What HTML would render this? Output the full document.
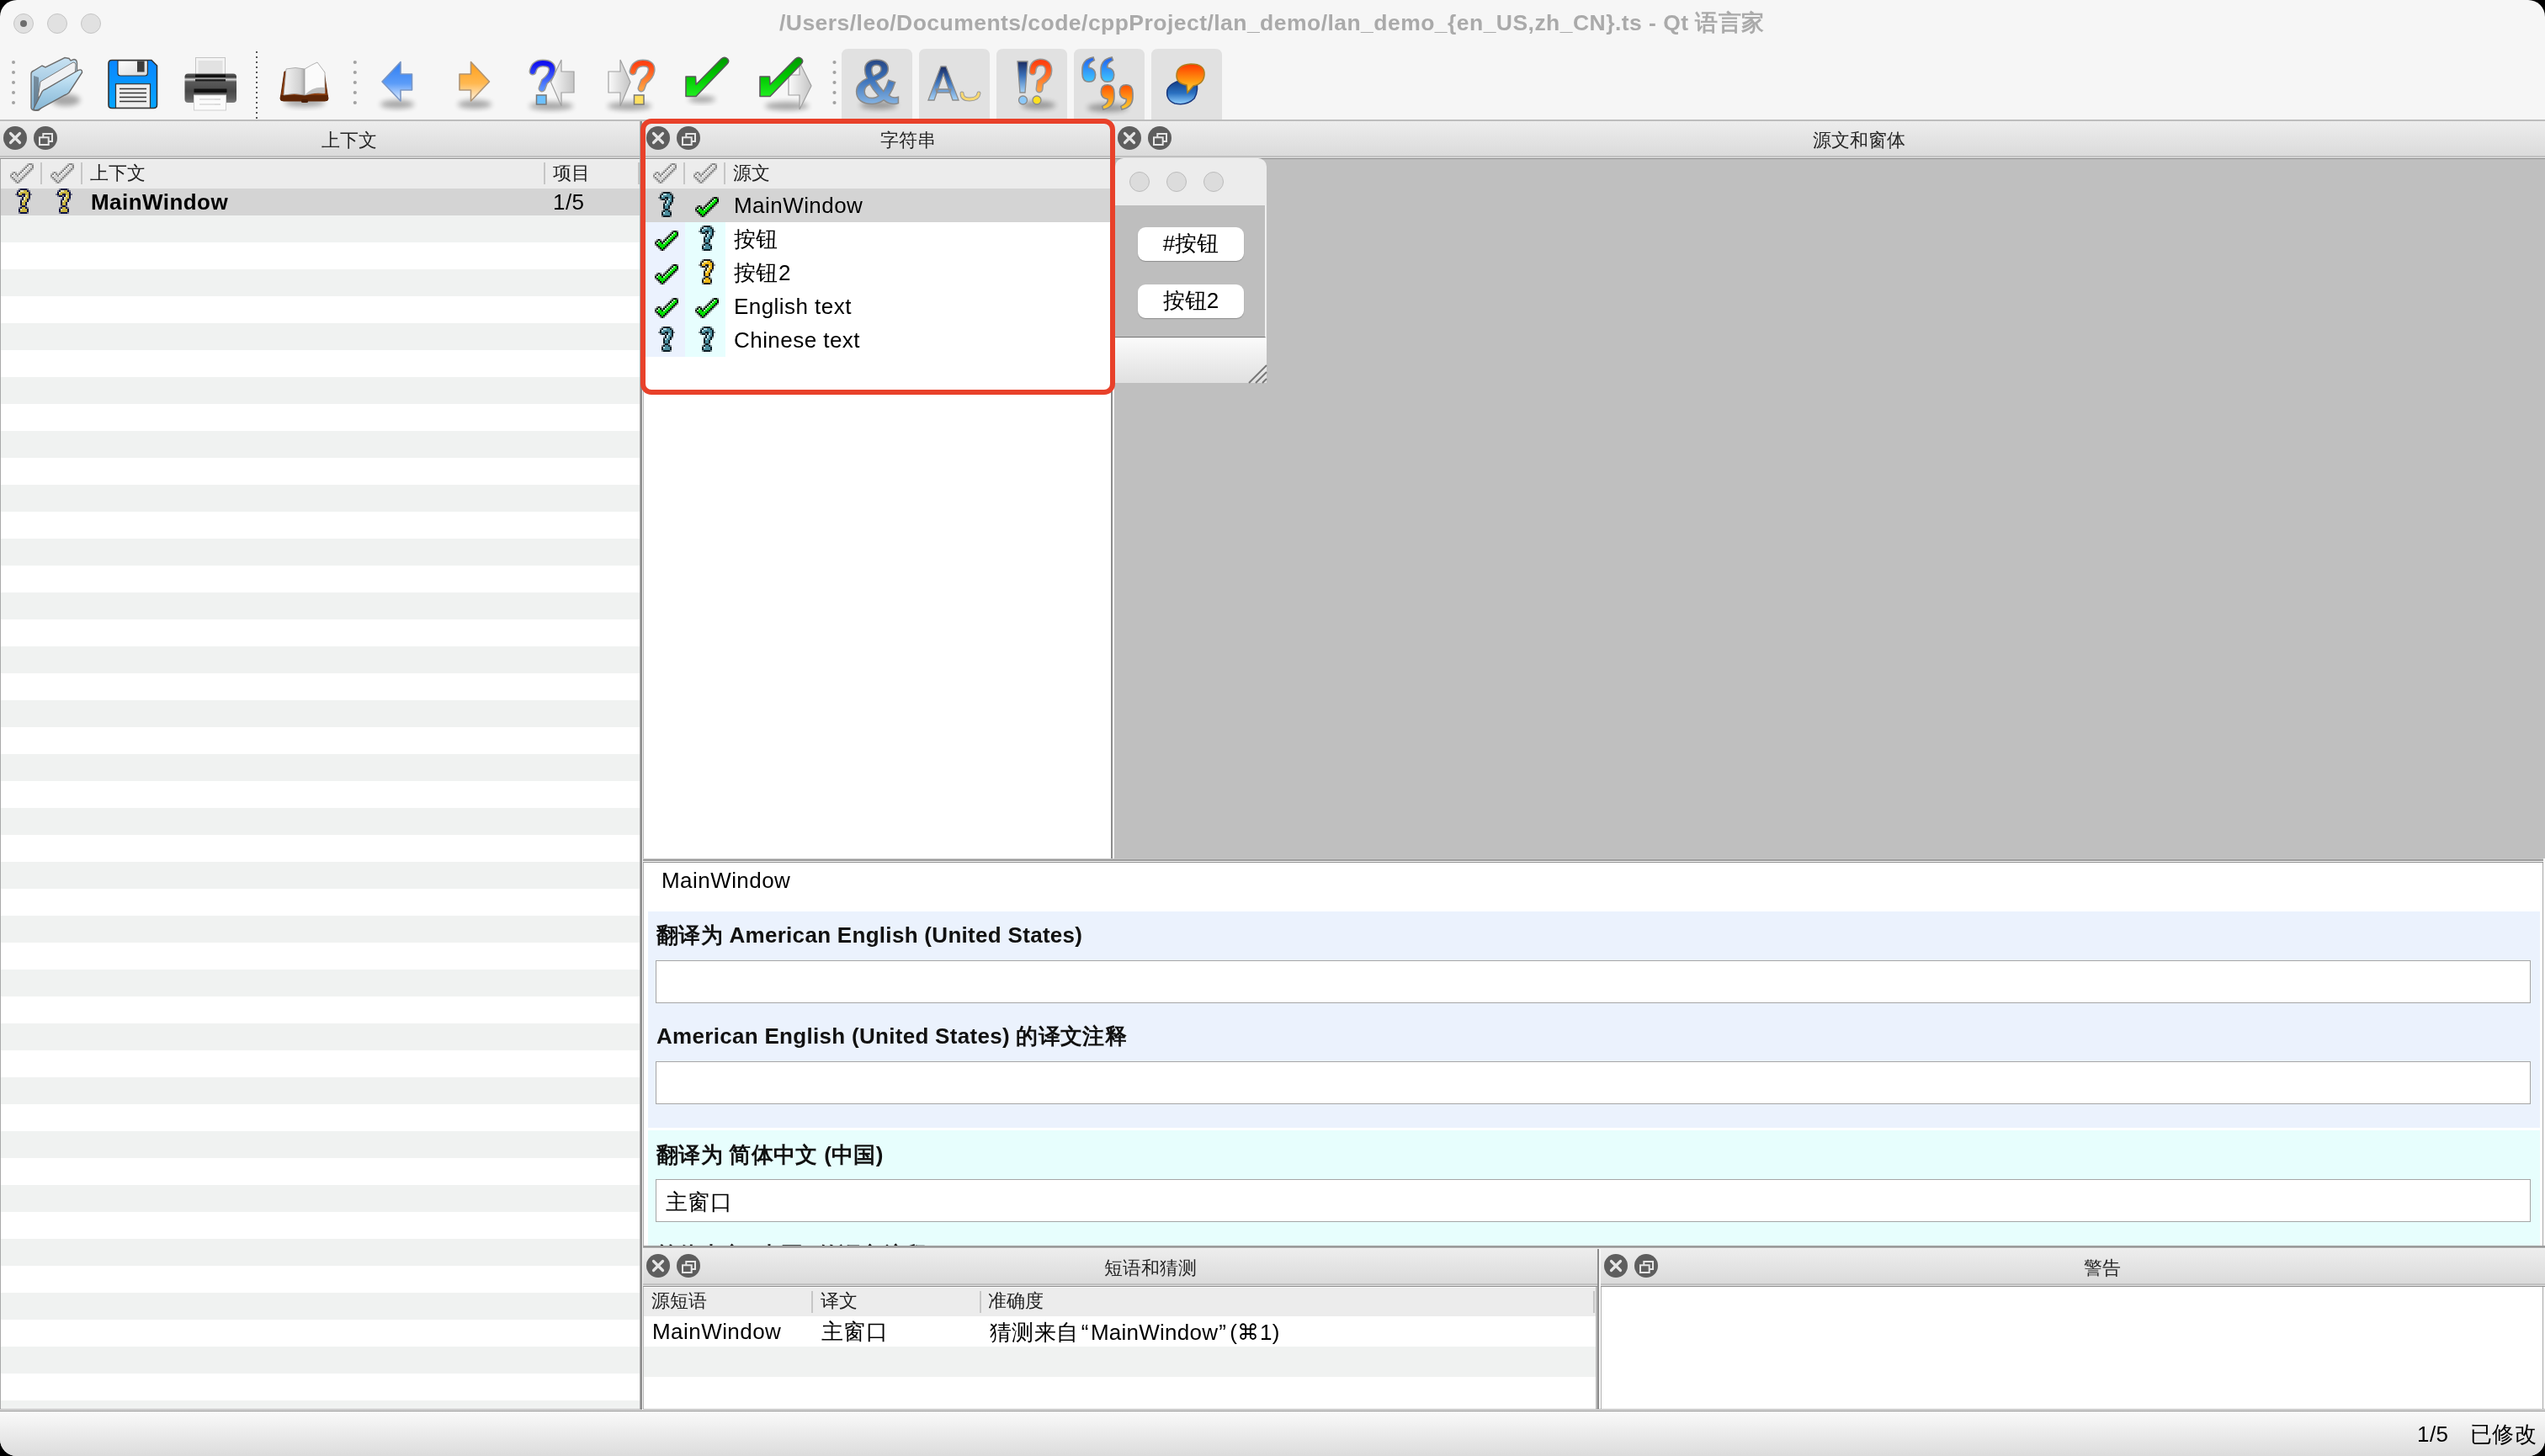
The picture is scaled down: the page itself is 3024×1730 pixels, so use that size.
<!DOCTYPE html><html><head><meta charset="utf-8"><style>
*{box-sizing:border-box;margin:0;padding:0}
html,body{width:3024px;height:1730px;overflow:hidden;background:#000}
body{font-family:"Liberation Sans",sans-serif;color:#000}
#win{will-change:transform;position:absolute;left:0;top:0;width:3024px;height:1730px;border-radius:20px;overflow:hidden;background:#f6f6f6}
.a{position:absolute}
svg{position:absolute;overflow:visible}
.tl{position:absolute;width:24px;height:24px;border-radius:50%;background:#e1e1e1;border:1px solid #c4c4c4;top:16px}
.title{position:absolute;top:9px;font-weight:bold;font-size:26.5px;color:#aaaaaa;white-space:pre;letter-spacing:0.46px}
.dtitle{position:absolute;height:45px;background:linear-gradient(#ededed,#d9d9d9)}
.dtitle .t{position:absolute;top:9px;text-align:center;font-size:22px;color:#262626;white-space:pre}
.hdr{position:absolute;background:#ececec;font-size:22px;color:#222}
.sep{position:absolute;width:2px;background:#c6c6c6}
.txt{position:absolute;white-space:pre;font-size:26px;letter-spacing:0.45px}
.htxt{position:absolute;white-space:pre;font-size:22px;color:#222}
.bh{position:absolute;white-space:pre;font-size:26px;font-weight:bold;color:#111;letter-spacing:0.3px}
.inp{position:absolute;background:#fff;border:1px solid #a6a6a6}
.tb{position:absolute;top:58px;width:84px;height:84px;background:#e1e1e1;border-radius:8px 8px 0 0}
</style></head><body><div id="win">
<div class="tl" style="left:16px"><div class="a" style="left:7px;top:7px;width:8px;height:8px;border-radius:50%;background:#6e6e6e"></div></div>
<div class="tl" style="left:56px"></div><div class="tl" style="left:96px"></div>
<div class="title" style="left:926px">/Users/leo/Documents/code/cppProject/lan_demo/lan_demo_{en_US,zh_CN}.ts - Qt 语言家</div>
<div class="a" style="left:13.6px;top:71.9px;width:4.2px;height:4.2px;border-radius:50%;background:#a2a2a2"></div><div class="a" style="left:13.6px;top:83.9px;width:4.2px;height:4.2px;border-radius:50%;background:#a2a2a2"></div><div class="a" style="left:13.6px;top:95.9px;width:4.2px;height:4.2px;border-radius:50%;background:#a2a2a2"></div><div class="a" style="left:13.6px;top:107.9px;width:4.2px;height:4.2px;border-radius:50%;background:#a2a2a2"></div><div class="a" style="left:13.6px;top:119.9px;width:4.2px;height:4.2px;border-radius:50%;background:#a2a2a2"></div><svg style="left:0;top:0" width="1460" height="142" viewBox="0 0 1460 142"><defs>
<linearGradient id="gfold" x1="0" y1="0" x2="0" y2="1"><stop offset="0" stop-color="#c9e3f3"/><stop offset="1" stop-color="#7fb0d2"/></linearGradient>
<linearGradient id="gfront" x1="0" y1="0" x2="0" y2="1"><stop offset="0" stop-color="#d4eefc"/><stop offset=".5" stop-color="#a8d0e8"/><stop offset="1" stop-color="#86b6d4"/></linearGradient>
<linearGradient id="gsave" x1="0" y1="0" x2="0" y2="1"><stop offset="0" stop-color="#0a86ff"/><stop offset="1" stop-color="#05a6ff"/></linearGradient>
<linearGradient id="gshut" x1="0" y1="0" x2="1" y2="1"><stop offset="0" stop-color="#ffffff"/><stop offset="1" stop-color="#d8d8d8"/></linearGradient>
<linearGradient id="gprint" x1="0" y1="0" x2="0" y2="1"><stop offset="0" stop-color="#5a5a5a"/><stop offset=".12" stop-color="#3c3c3c"/><stop offset=".2" stop-color="#d8d8d8"/><stop offset=".28" stop-color="#5a5a5a"/><stop offset=".6" stop-color="#484848"/><stop offset=".85" stop-color="#5c5c5c"/><stop offset="1" stop-color="#7c7c7c"/></linearGradient>
<linearGradient id="gpage" x1="0" y1="0" x2="1" y2="0"><stop offset="0" stop-color="#f4f4f4"/><stop offset=".8" stop-color="#d0d0d0"/><stop offset="1" stop-color="#a8a8a8"/></linearGradient>
<linearGradient id="gblue" x1="0" y1="0" x2="0" y2="1"><stop offset="0" stop-color="#2d7cf2"/><stop offset=".55" stop-color="#5b9cf8"/><stop offset="1" stop-color="#e6f0ff"/></linearGradient>
<linearGradient id="gorange" x1="0" y1="0" x2="0" y2="1"><stop offset="0" stop-color="#ff9e1a"/><stop offset=".55" stop-color="#ffb850"/><stop offset="1" stop-color="#fff4e4"/></linearGradient>
<linearGradient id="ggray" x1="0" y1="0" x2="1" y2="0"><stop offset="0" stop-color="#fafafa"/><stop offset="1" stop-color="#c4c4c4"/></linearGradient>
<linearGradient id="gq1" x1="0" y1="0" x2="0" y2="1"><stop offset="0" stop-color="#1010f0"/><stop offset="1" stop-color="#5a90ff"/></linearGradient>
<linearGradient id="gq2" x1="0" y1="0" x2="0" y2="1"><stop offset="0" stop-color="#ff4010"/><stop offset="1" stop-color="#ffa040"/></linearGradient>
<linearGradient id="ggreen" x1="0" y1="0" x2="0" y2="1"><stop offset="0" stop-color="#009a00"/><stop offset=".5" stop-color="#00c800"/><stop offset="1" stop-color="#20ee20"/></linearGradient>
<linearGradient id="gamp" x1="0" y1="0" x2="0" y2="1"><stop offset="0" stop-color="#1a2a60"/><stop offset=".45" stop-color="#3a70b8"/><stop offset="1" stop-color="#a8d4f8"/></linearGradient>
<linearGradient id="gyel" x1="0" y1="0" x2="0" y2="1"><stop offset="0" stop-color="#ffe890"/><stop offset="1" stop-color="#f0c040"/></linearGradient>
<linearGradient id="gdrop" x1="0" y1="0" x2="0" y2="1"><stop offset="0" stop-color="#0a2a70"/><stop offset=".6" stop-color="#2a70c0"/><stop offset="1" stop-color="#90d0ff"/></linearGradient>
<linearGradient id="gbub" x1="0" y1="0" x2="0" y2="1"><stop offset="0" stop-color="#ff3a00"/><stop offset=".6" stop-color="#ff9a10"/><stop offset="1" stop-color="#ffe040"/></linearGradient>
<filter id="blur" x="-50%" y="-50%" width="200%" height="200%"><feGaussianBlur stdDeviation="3"/></filter>
</defs><path d="M1000,142 L1000,66 Q1000,58 1008,58 L1076,58 Q1084,58 1084,66 L1084,142 Z" fill="#e1e1e1"/><path d="M1092,142 L1092,66 Q1092,58 1100,58 L1168,58 Q1176,58 1176,66 L1176,142 Z" fill="#e1e1e1"/><path d="M1184,142 L1184,66 Q1184,58 1192,58 L1260,58 Q1268,58 1268,66 L1268,142 Z" fill="#e1e1e1"/><path d="M1276,142 L1276,66 Q1276,58 1284,58 L1352,58 Q1360,58 1360,66 L1360,142 Z" fill="#e1e1e1"/><path d="M1368,142 L1368,66 Q1368,58 1376,58 L1444,58 Q1452,58 1452,66 L1452,142 Z" fill="#e1e1e1"/><ellipse cx="78" cy="119" rx="17" ry="7" fill="#000" opacity=".32" filter="url(#blur)"/><ellipse cx="362" cy="122" rx="24" ry="5" fill="#000" opacity=".32" filter="url(#blur)"/><ellipse cx="472" cy="124" rx="20" ry="5" fill="#000" opacity=".32" filter="url(#blur)"/><ellipse cx="564" cy="124" rx="20" ry="5" fill="#000" opacity=".32" filter="url(#blur)"/><ellipse cx="655" cy="126" rx="26" ry="5" fill="#000" opacity=".32" filter="url(#blur)"/><ellipse cx="748" cy="126" rx="26" ry="5" fill="#000" opacity=".32" filter="url(#blur)"/><ellipse cx="834" cy="118" rx="16" ry="4" fill="#000" opacity=".32" filter="url(#blur)"/><ellipse cx="935" cy="126" rx="26" ry="5" fill="#000" opacity=".32" filter="url(#blur)"/><ellipse cx="1044" cy="125" rx="22" ry="5" fill="#000" opacity=".32" filter="url(#blur)"/><ellipse cx="1234" cy="125" rx="20" ry="5" fill="#000" opacity=".32" filter="url(#blur)"/><ellipse cx="1316" cy="128" rx="24" ry="5" fill="#000" opacity=".32" filter="url(#blur)"/><path d="M37,128 L37,88 Q37,85 40,84 L50,78 L54,80 L77,68.5 L82,69.5 L84,72 L88,70.5 Q91.5,71 91.5,75 L91.5,85 L46,131 Q37,132 37,128 Z" fill="url(#gfold)" stroke="#707070" stroke-width="1.4"/><path d="M40,90 L46,92 L47,126 L40,129 Z" fill="#4a5560" opacity=".55"/><path d="M45,116 L48,97 L87,74 Q90,74 90,77 L89,90 Z" fill="#f0f1f3" stroke="#7a7a7a" stroke-width="1"/><path d="M40,129 L50,109 Q51,107 54,106 L93,83.5 Q97.5,81.5 97.6,86 L82,110 Q80,112 77,113 L45,130.5 Q40,132 40,129 Z" fill="url(#gfront)" stroke="#6a6a6a" stroke-width="1.4"/><path d="M133,71.5 L180,71.5 L186.5,78 L186.5,124.5 Q186.5,128.5 182.5,128.5 L133,128.5 Q129,128.5 129,124.5 L129,75.5 Q129,71.5 133,71.5 Z" fill="url(#gsave)" stroke="#333" stroke-width="1.6"/><path d="M140,72 L175.4,72 L175.4,87 Q175.4,90 172.4,90 L143,90 Q140,90 140,87 Z" fill="url(#gshut)" stroke="#333" stroke-width="1.2"/><rect x="163" y="72.5" width="8.6" height="13" fill="#3c3c3c"/><rect x="137.5" y="99.7" width="41" height="28.5" fill="#eeeeee" stroke="#333" stroke-width="1.2"/><line x1="142" y1="105.5" x2="174" y2="105.5" stroke="#333" stroke-width="1.6"/><line x1="142" y1="110.5" x2="174" y2="110.5" stroke="#333" stroke-width="1.6"/><line x1="142" y1="115.5" x2="174" y2="115.5" stroke="#333" stroke-width="1.6"/><line x1="142" y1="120.5" x2="174" y2="120.5" stroke="#333" stroke-width="1.6"/><rect x="232.5" y="68.5" width="35" height="25" fill="#f4f4f4" stroke="#c4c4c4"/><rect x="235.5" y="72" width="29" height="18" fill="#e2e2e2"/><rect x="219.5" y="87.5" width="61.5" height="34.5" rx="4" fill="url(#gprint)"/><rect x="232" y="88.5" width="36" height="3.5" fill="#111"/><rect x="232" y="92.5" width="36" height="1.6" fill="#9a9a9a"/><rect x="232" y="94.2" width="36" height="2.4" fill="#1a1a1a"/><rect x="230.5" y="105.5" width="39" height="4.5" fill="#111"/><rect x="230.5" y="113" width="38" height="18" fill="#fbfbfb" stroke="#cfcfcf"/><line x1="237" y1="118" x2="262" y2="118" stroke="#c8c8c8" stroke-width="1.2"/><line x1="237" y1="124" x2="262" y2="124" stroke="#c8c8c8" stroke-width="1.2"/><rect x="304" y="61" width="2" height="2" fill="#555"/><rect x="304" y="67" width="2" height="2" fill="#555"/><rect x="304" y="73" width="2" height="2" fill="#555"/><rect x="304" y="79" width="2" height="2" fill="#555"/><rect x="304" y="85" width="2" height="2" fill="#555"/><rect x="304" y="91" width="2" height="2" fill="#555"/><rect x="304" y="97" width="2" height="2" fill="#555"/><rect x="304" y="103" width="2" height="2" fill="#555"/><rect x="304" y="109" width="2" height="2" fill="#555"/><rect x="304" y="115" width="2" height="2" fill="#555"/><rect x="304" y="121" width="2" height="2" fill="#555"/><rect x="304" y="127" width="2" height="2" fill="#555"/><rect x="304" y="133" width="2" height="2" fill="#555"/><rect x="304" y="139" width="2" height="2" fill="#555"/><path d="M338,85 L334,112 L333,117 Q333,120 337,120 L386,120 Q390,120 390,117 L389,112 L385,85 Z" fill="#8c3c0c" stroke="#5a2404" stroke-width="1"/><path d="M334,113 L389,113 L390,118 Q390,120 386,120 L337,120 Q333,120 333,118 Z" fill="#5e2606"/><rect x="358" y="118" width="8" height="4" rx="1.5" fill="#4a1e04"/><path d="M340,82 Q351,79 362,82 L362,113 Q350,110 337,113 Z" fill="url(#gpage)" stroke="#a0a0a0" stroke-width=".8"/><path d="M362,82 Q370,77 377,74 L386,86 L386,111 Q374,109 362,113 Z" fill="#fbfbfb" stroke="#a0a0a0" stroke-width=".8"/><path d="M362,113 Q372,102 386,104 L386,111 Q374,109 362,113 Z" fill="#c0c0c0"/><circle cx="421.8" cy="74" r="2.1" fill="#a2a2a2"/><circle cx="421.8" cy="86" r="2.1" fill="#a2a2a2"/><circle cx="421.8" cy="98" r="2.1" fill="#a2a2a2"/><circle cx="421.8" cy="110" r="2.1" fill="#a2a2a2"/><circle cx="421.8" cy="122" r="2.1" fill="#a2a2a2"/><path d="M454,97 L476,73.5 L476,88 L489.5,88 L489.5,107 L476,107 L476,120 Z" fill="url(#gblue)" stroke="#7a96c4" stroke-width="1.6" stroke-linejoin="round"/><path d="M581.5,97 L559.5,73.5 L559.5,88 L546,88 L546,107 L559.5,107 L559.5,120 Z" fill="url(#gorange)" stroke="#b09474" stroke-width="1.6" stroke-linejoin="round"/><path d="M654.5,97.5 L667,71 L667,85 L682,85 L682,110 L667,110 L667,126 Z" fill="url(#ggray)" stroke="#a0a0a0" stroke-width="1.2"/><path d="M633,85 Q635,75 645,75 Q657,75 656,84 Q655,91 647,97 L644,105" fill="none" stroke="#999" stroke-width="9" stroke-linecap="round"/><path d="M633,85 Q635,75 645,75 Q657,75 656,84 Q655,91 647,97 L644,105" fill="none" stroke="url(#gq1)" stroke-width="6" stroke-linecap="round"/><rect x="637.5" y="113" width="11.5" height="11" fill="#6cc0ff" stroke="#777" stroke-width="1.5"/><path d="M749,97.5 L737,71 L737,85 L723,85 L723,110 L737,110 L737,126 Z" fill="url(#ggray)" stroke="#a0a0a0" stroke-width="1.2"/><path d="M752,85 Q754,75 764,75 Q775,75 774,84 Q773,91 765,97 L762,105" fill="none" stroke="#999" stroke-width="9" stroke-linecap="round"/><path d="M752,85 Q754,75 764,75 Q775,75 774,84 Q773,91 765,97 L762,105" fill="none" stroke="url(#gq2)" stroke-width="6" stroke-linecap="round"/><rect x="753.5" y="113" width="11.5" height="11" fill="#ffe060" stroke="#777" stroke-width="1.5"/><path d="M815,91 L826.5,91 L827,100.5 L857,70 Q861,66.5 864.5,70 Q867,73 864,76 L827,114.5 L815,114.5 Z" fill="url(#ggreen)" stroke="#5a5a5a" stroke-width="1.6" stroke-linejoin="round"/><path d="M964,102 L950,74 L950,89 L937,89 L937,113 L950,113 L950,130 Z" fill="url(#ggray)" stroke="#a0a0a0" stroke-width="1.2"/><path d="M903,91 L914.5,91 L915,100.5 L945,70 Q949,66.5 952.5,70 Q955,73 952,76 L915,114.5 L903,114.5 Z" fill="url(#ggreen)" stroke="#5a5a5a" stroke-width="1.6" stroke-linejoin="round"/><circle cx="991.5" cy="74" r="2.1" fill="#a2a2a2"/><circle cx="991.5" cy="86" r="2.1" fill="#a2a2a2"/><circle cx="991.5" cy="98" r="2.1" fill="#a2a2a2"/><circle cx="991.5" cy="110" r="2.1" fill="#a2a2a2"/><circle cx="991.5" cy="122" r="2.1" fill="#a2a2a2"/><text x="1042" y="123" text-anchor="middle" font-family="Liberation Sans" font-weight="bold" font-size="74" transform="translate(1042,0) scale(1.04,1) translate(-1042,0)" fill="url(#gamp)" stroke="#8a8a8a" stroke-width="1.5">&amp;</text><path d="M1103,119 L1118,79 L1124,79 L1139,119 L1132,119 L1121,88 L1110,119 Z M1112,106 L1130,106 L1129,110 L1113,110 Z" fill="url(#gamp)" stroke="#8a8a8a" stroke-width="1.3"/><path d="M1143,111 Q1143,118 1152,118 Q1162,118 1163,111" fill="none" stroke="#999" stroke-width="5" stroke-linecap="round"/><path d="M1143,111 Q1143,118 1152,118 Q1162,118 1163,111" fill="none" stroke="#f8d870" stroke-width="3" stroke-linecap="round"/><path d="M1209,73 L1221,73 L1218,110 L1212,110 Z" fill="url(#gamp)" stroke="#8a8a8a" stroke-width="1.3"/><circle cx="1215.5" cy="119" r="5" fill="#8cc8f8" stroke="#8a8a8a" stroke-width="1.3"/><path d="M1227,85 Q1227,75 1236,74 Q1246,74 1246,84 Q1246,92 1236,98 L1235,106" fill="none" stroke="#999" stroke-width="9" stroke-linecap="round"/><path d="M1227,85 Q1227,75 1236,74 Q1246,74 1246,84 Q1246,92 1236,98 L1235,106" fill="none" stroke="url(#gq2)" stroke-width="6" stroke-linecap="round"/><circle cx="1232" cy="119" r="5" fill="#ffe020" stroke="#8a8a8a" stroke-width="1.3"/><linearGradient id="gqb" x1="0" y1="0" x2="0" y2="1"><stop offset="0" stop-color="#2060f0"/><stop offset="1" stop-color="#40c8ff"/></linearGradient><linearGradient id="gqo" x1="0" y1="1" x2="0" y2="0"><stop offset="0" stop-color="#ff5000"/><stop offset="1" stop-color="#ffd030"/></linearGradient><g transform="translate(1286,68) scale(1.3,1.22)"><g transform="translate(0,0)"><path d="M0,12 Q0,2 10,0 L11,3 Q5,6 6,10 Q12,11 12,17 Q12,24 6,24 Q0,24 0,16 Z" fill="url(#gqb)" stroke="#8a8a8a" stroke-width="1.3"/><path d="M17,12 Q17,2 27,0 L28,3 Q22,6 23,10 Q29,11 29,17 Q29,24 23,24 Q17,24 17,16 Z" fill="url(#gqb)" stroke="#8a8a8a" stroke-width="1.3"/></g></g><g transform="translate(1346,130) scale(1.3,1.22)"><g transform="translate(0,0) rotate(180)"><path d="M0,12 Q0,2 10,0 L11,3 Q5,6 6,10 Q12,11 12,17 Q12,24 6,24 Q0,24 0,16 Z" fill="url(#gqo)" stroke="#8a8a8a" stroke-width="1.3"/><path d="M17,12 Q17,2 27,0 L28,3 Q22,6 23,10 Q29,11 29,17 Q29,24 23,24 Q17,24 17,16 Z" fill="url(#gqo)" stroke="#8a8a8a" stroke-width="1.3"/></g></g><path d="M1421,91 Q1425,108 1419,117 Q1410,126 1396,123 Q1385,119 1387,107 Q1390,96 1421,91 Z" fill="url(#gdrop)" stroke="#1a3a80" stroke-width="1.6"/><path d="M1398,90 Q1398,77 1415,76 Q1432,76 1431,89 Q1430,100 1418,102 L1411,110 L1410,101 Q1398,99 1398,90 Z" fill="url(#gbub)" stroke="#b08020" stroke-width="1.6"/></svg>
<div class="a" style="left:0;top:142px;width:3024px;height:2px;background:#bdbdbd"></div>
<div class="dtitle" style="left:0px;top:144px;width:760px"></div>
<div class="a" style="left:0px;top:185px;width:760px;height:2px;background:#c0c0c0"></div>
<div class="a" style="left:0px;top:187px;width:760px;height:1px;background:#e0e0e0"></div>
<div class="a" style="left:0px;top:188px;width:760px;height:1px;background:#8e8e8e"></div>
<div class="dtitle" style="display:none"></div>
<div class="htxt" style="left:70px;top:152px;width:690px;text-align:center;color:#262626">上下文</div>
<svg style="left:3px;top:149px" width="30" height="30" viewBox="-15 -15 30 30"><circle r="14" fill="#5e5e5e"/><path d="M-5.5,-5.5L5.5,5.5M5.5,-5.5L-5.5,5.5" stroke="#e6e6e6" stroke-width="3.2" stroke-linecap="round"/></svg>
<svg style="left:39px;top:149px" width="30" height="30" viewBox="-15 -15 30 30"><circle r="14" fill="#5e5e5e"/><rect x="-2.7" y="-5" width="10.7" height="9" fill="none" stroke="#e6e6e6" stroke-width="2"/><rect x="-7" y="-0.7" width="10.7" height="8.7" fill="#5e5e5e" stroke="#e6e6e6" stroke-width="2"/></svg>
<div class="a" style="left:0;top:189px;width:760px;height:1486px;background:repeating-linear-gradient(to bottom,#f0f2f1 0,#f0f2f1 32px,#fff 32px,#fff 64px);background-position:0 67px"></div>
<div class="a" style="left:0px;top:189px;width:1px;height:1486px;background:#a9a9a9"></div>
<div class="hdr" style="left:1px;top:189px;width:759px;height:35px;border-top:1px solid #f8f8f8"></div>
<svg style="left:12px;top:194px" width="28" height="24" shape-rendering="crispEdges"><rect x="20" y="0" width="2" height="2" fill="#9a9a9a" fill-opacity="0.55"/><rect x="22" y="0" width="4" height="2" fill="#888888"/><rect x="26" y="0" width="2" height="2" fill="#9a9a9a" fill-opacity="0.55"/><rect x="18" y="2" width="2" height="2" fill="#9a9a9a" fill-opacity="0.55"/><rect x="20" y="2" width="2" height="2" fill="#888888"/><rect x="22" y="2" width="2" height="2" fill="#f2f2f2"/><rect x="24" y="2" width="2" height="2" fill="#d4d4d4"/><rect x="26" y="2" width="2" height="2" fill="#888888"/><rect x="16" y="4" width="2" height="2" fill="#9a9a9a" fill-opacity="0.55"/><rect x="18" y="4" width="2" height="2" fill="#888888"/><rect x="20" y="4" width="2" height="2" fill="#f2f2f2"/><rect x="22" y="4" width="4" height="2" fill="#d4d4d4"/><rect x="26" y="4" width="2" height="2" fill="#888888"/><rect x="14" y="6" width="2" height="2" fill="#9a9a9a" fill-opacity="0.55"/><rect x="16" y="6" width="2" height="2" fill="#888888"/><rect x="18" y="6" width="2" height="2" fill="#f2f2f2"/><rect x="20" y="6" width="4" height="2" fill="#d4d4d4"/><rect x="24" y="6" width="2" height="2" fill="#888888"/><rect x="26" y="6" width="2" height="2" fill="#9a9a9a" fill-opacity="0.55"/><rect x="12" y="8" width="2" height="2" fill="#9a9a9a" fill-opacity="0.55"/><rect x="14" y="8" width="2" height="2" fill="#888888"/><rect x="16" y="8" width="2" height="2" fill="#f2f2f2"/><rect x="18" y="8" width="4" height="2" fill="#d4d4d4"/><rect x="22" y="8" width="2" height="2" fill="#888888"/><rect x="24" y="8" width="2" height="2" fill="#9a9a9a" fill-opacity="0.55"/><rect x="2" y="10" width="2" height="2" fill="#9a9a9a" fill-opacity="0.55"/><rect x="4" y="10" width="2" height="2" fill="#888888"/><rect x="6" y="10" width="2" height="2" fill="#9a9a9a" fill-opacity="0.55"/><rect x="10" y="10" width="2" height="2" fill="#9a9a9a" fill-opacity="0.55"/><rect x="12" y="10" width="2" height="2" fill="#888888"/><rect x="14" y="10" width="2" height="2" fill="#f2f2f2"/><rect x="16" y="10" width="4" height="2" fill="#d4d4d4"/><rect x="20" y="10" width="2" height="2" fill="#888888"/><rect x="22" y="10" width="2" height="2" fill="#9a9a9a" fill-opacity="0.55"/><rect x="0" y="12" width="2" height="2" fill="#9a9a9a" fill-opacity="0.55"/><rect x="2" y="12" width="2" height="2" fill="#888888"/><rect x="4" y="12" width="2" height="2" fill="#f2f2f2"/><rect x="6" y="12" width="2" height="2" fill="#888888"/><rect x="8" y="12" width="2" height="2" fill="#9a9a9a" fill-opacity="0.55"/><rect x="10" y="12" width="2" height="2" fill="#888888"/><rect x="12" y="12" width="2" height="2" fill="#f2f2f2"/><rect x="14" y="12" width="4" height="2" fill="#d4d4d4"/><rect x="18" y="12" width="2" height="2" fill="#888888"/><rect x="20" y="12" width="2" height="2" fill="#9a9a9a" fill-opacity="0.55"/><rect x="0" y="14" width="2" height="2" fill="#888888"/><rect x="2" y="14" width="2" height="2" fill="#f2f2f2"/><rect x="4" y="14" width="4" height="2" fill="#d4d4d4"/><rect x="8" y="14" width="2" height="2" fill="#888888"/><rect x="10" y="14" width="2" height="2" fill="#f2f2f2"/><rect x="12" y="14" width="4" height="2" fill="#d4d4d4"/><rect x="16" y="14" width="2" height="2" fill="#888888"/><rect x="18" y="14" width="2" height="2" fill="#9a9a9a" fill-opacity="0.55"/><rect x="0" y="16" width="2" height="2" fill="#9a9a9a" fill-opacity="0.55"/><rect x="2" y="16" width="2" height="2" fill="#888888"/><rect x="4" y="16" width="10" height="2" fill="#d4d4d4"/><rect x="14" y="16" width="2" height="2" fill="#888888"/><rect x="16" y="16" width="2" height="2" fill="#9a9a9a" fill-opacity="0.55"/><rect x="2" y="18" width="2" height="2" fill="#9a9a9a" fill-opacity="0.55"/><rect x="4" y="18" width="2" height="2" fill="#888888"/><rect x="6" y="18" width="6" height="2" fill="#d4d4d4"/><rect x="12" y="18" width="2" height="2" fill="#888888"/><rect x="14" y="18" width="2" height="2" fill="#9a9a9a" fill-opacity="0.55"/><rect x="4" y="20" width="2" height="2" fill="#9a9a9a" fill-opacity="0.55"/><rect x="6" y="20" width="2" height="2" fill="#888888"/><rect x="8" y="20" width="2" height="2" fill="#d4d4d4"/><rect x="10" y="20" width="2" height="2" fill="#888888"/><rect x="12" y="20" width="2" height="2" fill="#9a9a9a" fill-opacity="0.55"/><rect x="6" y="22" width="2" height="2" fill="#9a9a9a" fill-opacity="0.55"/><rect x="8" y="22" width="2" height="2" fill="#888888"/><rect x="10" y="22" width="2" height="2" fill="#9a9a9a" fill-opacity="0.55"/></svg>
<svg style="left:60px;top:194px" width="28" height="24" shape-rendering="crispEdges"><rect x="20" y="0" width="2" height="2" fill="#9a9a9a" fill-opacity="0.55"/><rect x="22" y="0" width="4" height="2" fill="#888888"/><rect x="26" y="0" width="2" height="2" fill="#9a9a9a" fill-opacity="0.55"/><rect x="18" y="2" width="2" height="2" fill="#9a9a9a" fill-opacity="0.55"/><rect x="20" y="2" width="2" height="2" fill="#888888"/><rect x="22" y="2" width="2" height="2" fill="#f2f2f2"/><rect x="24" y="2" width="2" height="2" fill="#d4d4d4"/><rect x="26" y="2" width="2" height="2" fill="#888888"/><rect x="16" y="4" width="2" height="2" fill="#9a9a9a" fill-opacity="0.55"/><rect x="18" y="4" width="2" height="2" fill="#888888"/><rect x="20" y="4" width="2" height="2" fill="#f2f2f2"/><rect x="22" y="4" width="4" height="2" fill="#d4d4d4"/><rect x="26" y="4" width="2" height="2" fill="#888888"/><rect x="14" y="6" width="2" height="2" fill="#9a9a9a" fill-opacity="0.55"/><rect x="16" y="6" width="2" height="2" fill="#888888"/><rect x="18" y="6" width="2" height="2" fill="#f2f2f2"/><rect x="20" y="6" width="4" height="2" fill="#d4d4d4"/><rect x="24" y="6" width="2" height="2" fill="#888888"/><rect x="26" y="6" width="2" height="2" fill="#9a9a9a" fill-opacity="0.55"/><rect x="12" y="8" width="2" height="2" fill="#9a9a9a" fill-opacity="0.55"/><rect x="14" y="8" width="2" height="2" fill="#888888"/><rect x="16" y="8" width="2" height="2" fill="#f2f2f2"/><rect x="18" y="8" width="4" height="2" fill="#d4d4d4"/><rect x="22" y="8" width="2" height="2" fill="#888888"/><rect x="24" y="8" width="2" height="2" fill="#9a9a9a" fill-opacity="0.55"/><rect x="2" y="10" width="2" height="2" fill="#9a9a9a" fill-opacity="0.55"/><rect x="4" y="10" width="2" height="2" fill="#888888"/><rect x="6" y="10" width="2" height="2" fill="#9a9a9a" fill-opacity="0.55"/><rect x="10" y="10" width="2" height="2" fill="#9a9a9a" fill-opacity="0.55"/><rect x="12" y="10" width="2" height="2" fill="#888888"/><rect x="14" y="10" width="2" height="2" fill="#f2f2f2"/><rect x="16" y="10" width="4" height="2" fill="#d4d4d4"/><rect x="20" y="10" width="2" height="2" fill="#888888"/><rect x="22" y="10" width="2" height="2" fill="#9a9a9a" fill-opacity="0.55"/><rect x="0" y="12" width="2" height="2" fill="#9a9a9a" fill-opacity="0.55"/><rect x="2" y="12" width="2" height="2" fill="#888888"/><rect x="4" y="12" width="2" height="2" fill="#f2f2f2"/><rect x="6" y="12" width="2" height="2" fill="#888888"/><rect x="8" y="12" width="2" height="2" fill="#9a9a9a" fill-opacity="0.55"/><rect x="10" y="12" width="2" height="2" fill="#888888"/><rect x="12" y="12" width="2" height="2" fill="#f2f2f2"/><rect x="14" y="12" width="4" height="2" fill="#d4d4d4"/><rect x="18" y="12" width="2" height="2" fill="#888888"/><rect x="20" y="12" width="2" height="2" fill="#9a9a9a" fill-opacity="0.55"/><rect x="0" y="14" width="2" height="2" fill="#888888"/><rect x="2" y="14" width="2" height="2" fill="#f2f2f2"/><rect x="4" y="14" width="4" height="2" fill="#d4d4d4"/><rect x="8" y="14" width="2" height="2" fill="#888888"/><rect x="10" y="14" width="2" height="2" fill="#f2f2f2"/><rect x="12" y="14" width="4" height="2" fill="#d4d4d4"/><rect x="16" y="14" width="2" height="2" fill="#888888"/><rect x="18" y="14" width="2" height="2" fill="#9a9a9a" fill-opacity="0.55"/><rect x="0" y="16" width="2" height="2" fill="#9a9a9a" fill-opacity="0.55"/><rect x="2" y="16" width="2" height="2" fill="#888888"/><rect x="4" y="16" width="10" height="2" fill="#d4d4d4"/><rect x="14" y="16" width="2" height="2" fill="#888888"/><rect x="16" y="16" width="2" height="2" fill="#9a9a9a" fill-opacity="0.55"/><rect x="2" y="18" width="2" height="2" fill="#9a9a9a" fill-opacity="0.55"/><rect x="4" y="18" width="2" height="2" fill="#888888"/><rect x="6" y="18" width="6" height="2" fill="#d4d4d4"/><rect x="12" y="18" width="2" height="2" fill="#888888"/><rect x="14" y="18" width="2" height="2" fill="#9a9a9a" fill-opacity="0.55"/><rect x="4" y="20" width="2" height="2" fill="#9a9a9a" fill-opacity="0.55"/><rect x="6" y="20" width="2" height="2" fill="#888888"/><rect x="8" y="20" width="2" height="2" fill="#d4d4d4"/><rect x="10" y="20" width="2" height="2" fill="#888888"/><rect x="12" y="20" width="2" height="2" fill="#9a9a9a" fill-opacity="0.55"/><rect x="6" y="22" width="2" height="2" fill="#9a9a9a" fill-opacity="0.55"/><rect x="8" y="22" width="2" height="2" fill="#888888"/><rect x="10" y="22" width="2" height="2" fill="#9a9a9a" fill-opacity="0.55"/></svg>
<div class="sep" style="left:48px;top:193px;height:26px"></div>
<div class="sep" style="left:96px;top:193px;height:26px"></div>
<div class="sep" style="left:646px;top:193px;height:26px"></div>
<div class="sep" style="left:758px;top:193px;height:26px"></div>
<div class="htxt" style="left:107px;top:191px">上下文</div>
<div class="htxt" style="left:657px;top:191px">项目</div>
<div class="a" style="left:1px;top:224px;width:759px;height:32px;background:#d4d4d4"></div>
<svg style="left:18px;top:224px" width="20" height="30" shape-rendering="crispEdges"><rect x="4" y="0" width="2" height="2" fill="#0a1040" fill-opacity="0.45"/><rect x="6" y="0" width="8" height="2" fill="#0a1040"/><rect x="14" y="0" width="2" height="2" fill="#0a1040" fill-opacity="0.45"/><rect x="2" y="2" width="2" height="2" fill="#0a1040" fill-opacity="0.45"/><rect x="4" y="2" width="2" height="2" fill="#0a1040"/><rect x="6" y="2" width="4" height="2" fill="#e8e4b0"/><rect x="10" y="2" width="4" height="2" fill="#c8b440"/><rect x="14" y="2" width="2" height="2" fill="#0a1040"/><rect x="16" y="2" width="2" height="2" fill="#0a1040" fill-opacity="0.45"/><rect x="2" y="4" width="2" height="2" fill="#0a1040"/><rect x="4" y="4" width="2" height="2" fill="#e8e4b0"/><rect x="6" y="4" width="10" height="2" fill="#c8b440"/><rect x="16" y="4" width="2" height="2" fill="#0a1040"/><rect x="0" y="6" width="2" height="2" fill="#0a1040" fill-opacity="0.45"/><rect x="2" y="6" width="2" height="2" fill="#0a1040"/><rect x="4" y="6" width="4" height="2" fill="#c8b440"/><rect x="8" y="6" width="4" height="2" fill="#0a1040"/><rect x="12" y="6" width="4" height="2" fill="#c8b440"/><rect x="16" y="6" width="2" height="2" fill="#0a1040"/><rect x="18" y="6" width="2" height="2" fill="#0a1040" fill-opacity="0.45"/><rect x="2" y="8" width="2" height="2" fill="#0a1040" fill-opacity="0.45"/><rect x="4" y="8" width="4" height="2" fill="#0a1040"/><rect x="8" y="8" width="2" height="2" fill="#0a1040" fill-opacity="0.45"/><rect x="10" y="8" width="2" height="2" fill="#0a1040"/><rect x="12" y="8" width="2" height="2" fill="#e8e4b0"/><rect x="14" y="8" width="2" height="2" fill="#c8b440"/><rect x="16" y="8" width="2" height="2" fill="#0a1040"/><rect x="8" y="10" width="2" height="2" fill="#0a1040"/><rect x="10" y="10" width="2" height="2" fill="#e8e4b0"/><rect x="12" y="10" width="4" height="2" fill="#c8b440"/><rect x="16" y="10" width="2" height="2" fill="#0a1040"/><rect x="6" y="12" width="2" height="2" fill="#0a1040" fill-opacity="0.45"/><rect x="8" y="12" width="2" height="2" fill="#0a1040"/><rect x="10" y="12" width="2" height="2" fill="#e8e4b0"/><rect x="12" y="12" width="2" height="2" fill="#c8b440"/><rect x="14" y="12" width="2" height="2" fill="#0a1040"/><rect x="16" y="12" width="2" height="2" fill="#0a1040" fill-opacity="0.45"/><rect x="6" y="14" width="2" height="2" fill="#0a1040"/><rect x="8" y="14" width="2" height="2" fill="#e8e4b0"/><rect x="10" y="14" width="4" height="2" fill="#c8b440"/><rect x="14" y="14" width="2" height="2" fill="#0a1040"/><rect x="6" y="16" width="2" height="2" fill="#0a1040"/><rect x="8" y="16" width="4" height="2" fill="#c8b440"/><rect x="12" y="16" width="2" height="2" fill="#0a1040"/><rect x="6" y="18" width="2" height="2" fill="#0a1040"/><rect x="8" y="18" width="4" height="2" fill="#c8b440"/><rect x="12" y="18" width="2" height="2" fill="#0a1040"/><rect x="6" y="20" width="2" height="2" fill="#0a1040" fill-opacity="0.45"/><rect x="8" y="20" width="4" height="2" fill="#0a1040"/><rect x="12" y="20" width="2" height="2" fill="#0a1040" fill-opacity="0.45"/><rect x="4" y="22" width="2" height="2" fill="#0a1040" fill-opacity="0.45"/><rect x="6" y="22" width="2" height="2" fill="#0a1040"/><rect x="8" y="22" width="4" height="2" fill="#c8b440"/><rect x="12" y="22" width="2" height="2" fill="#0a1040"/><rect x="14" y="22" width="2" height="2" fill="#0a1040" fill-opacity="0.45"/><rect x="4" y="24" width="2" height="2" fill="#0a1040"/><rect x="6" y="24" width="2" height="2" fill="#e8e4b0"/><rect x="8" y="24" width="6" height="2" fill="#c8b440"/><rect x="14" y="24" width="2" height="2" fill="#0a1040"/><rect x="4" y="26" width="2" height="2" fill="#0a1040"/><rect x="6" y="26" width="8" height="2" fill="#c8b440"/><rect x="14" y="26" width="2" height="2" fill="#0a1040"/><rect x="4" y="28" width="2" height="2" fill="#0a1040" fill-opacity="0.45"/><rect x="6" y="28" width="8" height="2" fill="#0a1040"/><rect x="14" y="28" width="2" height="2" fill="#0a1040" fill-opacity="0.45"/></svg>
<svg style="left:66px;top:224px" width="20" height="30" shape-rendering="crispEdges"><rect x="4" y="0" width="2" height="2" fill="#0a1040" fill-opacity="0.45"/><rect x="6" y="0" width="8" height="2" fill="#0a1040"/><rect x="14" y="0" width="2" height="2" fill="#0a1040" fill-opacity="0.45"/><rect x="2" y="2" width="2" height="2" fill="#0a1040" fill-opacity="0.45"/><rect x="4" y="2" width="2" height="2" fill="#0a1040"/><rect x="6" y="2" width="4" height="2" fill="#e8e4b0"/><rect x="10" y="2" width="4" height="2" fill="#c8b440"/><rect x="14" y="2" width="2" height="2" fill="#0a1040"/><rect x="16" y="2" width="2" height="2" fill="#0a1040" fill-opacity="0.45"/><rect x="2" y="4" width="2" height="2" fill="#0a1040"/><rect x="4" y="4" width="2" height="2" fill="#e8e4b0"/><rect x="6" y="4" width="10" height="2" fill="#c8b440"/><rect x="16" y="4" width="2" height="2" fill="#0a1040"/><rect x="0" y="6" width="2" height="2" fill="#0a1040" fill-opacity="0.45"/><rect x="2" y="6" width="2" height="2" fill="#0a1040"/><rect x="4" y="6" width="4" height="2" fill="#c8b440"/><rect x="8" y="6" width="4" height="2" fill="#0a1040"/><rect x="12" y="6" width="4" height="2" fill="#c8b440"/><rect x="16" y="6" width="2" height="2" fill="#0a1040"/><rect x="18" y="6" width="2" height="2" fill="#0a1040" fill-opacity="0.45"/><rect x="2" y="8" width="2" height="2" fill="#0a1040" fill-opacity="0.45"/><rect x="4" y="8" width="4" height="2" fill="#0a1040"/><rect x="8" y="8" width="2" height="2" fill="#0a1040" fill-opacity="0.45"/><rect x="10" y="8" width="2" height="2" fill="#0a1040"/><rect x="12" y="8" width="2" height="2" fill="#e8e4b0"/><rect x="14" y="8" width="2" height="2" fill="#c8b440"/><rect x="16" y="8" width="2" height="2" fill="#0a1040"/><rect x="8" y="10" width="2" height="2" fill="#0a1040"/><rect x="10" y="10" width="2" height="2" fill="#e8e4b0"/><rect x="12" y="10" width="4" height="2" fill="#c8b440"/><rect x="16" y="10" width="2" height="2" fill="#0a1040"/><rect x="6" y="12" width="2" height="2" fill="#0a1040" fill-opacity="0.45"/><rect x="8" y="12" width="2" height="2" fill="#0a1040"/><rect x="10" y="12" width="2" height="2" fill="#e8e4b0"/><rect x="12" y="12" width="2" height="2" fill="#c8b440"/><rect x="14" y="12" width="2" height="2" fill="#0a1040"/><rect x="16" y="12" width="2" height="2" fill="#0a1040" fill-opacity="0.45"/><rect x="6" y="14" width="2" height="2" fill="#0a1040"/><rect x="8" y="14" width="2" height="2" fill="#e8e4b0"/><rect x="10" y="14" width="4" height="2" fill="#c8b440"/><rect x="14" y="14" width="2" height="2" fill="#0a1040"/><rect x="6" y="16" width="2" height="2" fill="#0a1040"/><rect x="8" y="16" width="4" height="2" fill="#c8b440"/><rect x="12" y="16" width="2" height="2" fill="#0a1040"/><rect x="6" y="18" width="2" height="2" fill="#0a1040"/><rect x="8" y="18" width="4" height="2" fill="#c8b440"/><rect x="12" y="18" width="2" height="2" fill="#0a1040"/><rect x="6" y="20" width="2" height="2" fill="#0a1040" fill-opacity="0.45"/><rect x="8" y="20" width="4" height="2" fill="#0a1040"/><rect x="12" y="20" width="2" height="2" fill="#0a1040" fill-opacity="0.45"/><rect x="4" y="22" width="2" height="2" fill="#0a1040" fill-opacity="0.45"/><rect x="6" y="22" width="2" height="2" fill="#0a1040"/><rect x="8" y="22" width="4" height="2" fill="#c8b440"/><rect x="12" y="22" width="2" height="2" fill="#0a1040"/><rect x="14" y="22" width="2" height="2" fill="#0a1040" fill-opacity="0.45"/><rect x="4" y="24" width="2" height="2" fill="#0a1040"/><rect x="6" y="24" width="2" height="2" fill="#e8e4b0"/><rect x="8" y="24" width="6" height="2" fill="#c8b440"/><rect x="14" y="24" width="2" height="2" fill="#0a1040"/><rect x="4" y="26" width="2" height="2" fill="#0a1040"/><rect x="6" y="26" width="8" height="2" fill="#c8b440"/><rect x="14" y="26" width="2" height="2" fill="#0a1040"/><rect x="4" y="28" width="2" height="2" fill="#0a1040" fill-opacity="0.45"/><rect x="6" y="28" width="8" height="2" fill="#0a1040"/><rect x="14" y="28" width="2" height="2" fill="#0a1040" fill-opacity="0.45"/></svg>
<div class="txt" style="left:108px;top:225px;font-weight:bold">MainWindow</div>
<div class="txt" style="left:657px;top:225px">1/5</div>
<div class="a" style="left:0px;top:1674px;width:760px;height:1px;background:#b4b4b4"></div>
<div class="a" style="left:760px;top:144px;width:1px;height:1531px;background:#acacac"></div>
<div class="a" style="left:761px;top:144px;width:2px;height:1531px;background:#8c8c8c"></div>
<div class="a" style="left:763px;top:144px;width:1px;height:1531px;background:#f4f4f4"></div>
<div class="a" style="left:764px;top:189px;width:1px;height:1486px;background:#b8b8b8"></div>
<div class="dtitle" style="left:764px;top:144px;width:560px"></div>
<div class="a" style="left:764px;top:185px;width:560px;height:2px;background:#c0c0c0"></div>
<div class="a" style="left:764px;top:187px;width:560px;height:1px;background:#e0e0e0"></div>
<div class="a" style="left:764px;top:188px;width:560px;height:1px;background:#8e8e8e"></div>
<div class="dtitle" style="display:none"></div>
<div class="htxt" style="left:834px;top:152px;width:490px;text-align:center;color:#262626">字符串</div>
<svg style="left:767px;top:149px" width="30" height="30" viewBox="-15 -15 30 30"><circle r="14" fill="#5e5e5e"/><path d="M-5.5,-5.5L5.5,5.5M5.5,-5.5L-5.5,5.5" stroke="#e6e6e6" stroke-width="3.2" stroke-linecap="round"/></svg>
<svg style="left:803px;top:149px" width="30" height="30" viewBox="-15 -15 30 30"><circle r="14" fill="#5e5e5e"/><rect x="-2.7" y="-5" width="10.7" height="9" fill="none" stroke="#e6e6e6" stroke-width="2"/><rect x="-7" y="-0.7" width="10.7" height="8.7" fill="#5e5e5e" stroke="#e6e6e6" stroke-width="2"/></svg>
<div class="a" style="left:765px;top:189px;width:555px;height:831px;background:#fff"></div>
<div class="hdr" style="left:765px;top:189px;width:555px;height:35px;border-top:1px solid #f8f8f8"></div>
<svg style="left:776px;top:194px" width="28" height="24" shape-rendering="crispEdges"><rect x="20" y="0" width="2" height="2" fill="#9a9a9a" fill-opacity="0.55"/><rect x="22" y="0" width="4" height="2" fill="#888888"/><rect x="26" y="0" width="2" height="2" fill="#9a9a9a" fill-opacity="0.55"/><rect x="18" y="2" width="2" height="2" fill="#9a9a9a" fill-opacity="0.55"/><rect x="20" y="2" width="2" height="2" fill="#888888"/><rect x="22" y="2" width="2" height="2" fill="#f2f2f2"/><rect x="24" y="2" width="2" height="2" fill="#d4d4d4"/><rect x="26" y="2" width="2" height="2" fill="#888888"/><rect x="16" y="4" width="2" height="2" fill="#9a9a9a" fill-opacity="0.55"/><rect x="18" y="4" width="2" height="2" fill="#888888"/><rect x="20" y="4" width="2" height="2" fill="#f2f2f2"/><rect x="22" y="4" width="4" height="2" fill="#d4d4d4"/><rect x="26" y="4" width="2" height="2" fill="#888888"/><rect x="14" y="6" width="2" height="2" fill="#9a9a9a" fill-opacity="0.55"/><rect x="16" y="6" width="2" height="2" fill="#888888"/><rect x="18" y="6" width="2" height="2" fill="#f2f2f2"/><rect x="20" y="6" width="4" height="2" fill="#d4d4d4"/><rect x="24" y="6" width="2" height="2" fill="#888888"/><rect x="26" y="6" width="2" height="2" fill="#9a9a9a" fill-opacity="0.55"/><rect x="12" y="8" width="2" height="2" fill="#9a9a9a" fill-opacity="0.55"/><rect x="14" y="8" width="2" height="2" fill="#888888"/><rect x="16" y="8" width="2" height="2" fill="#f2f2f2"/><rect x="18" y="8" width="4" height="2" fill="#d4d4d4"/><rect x="22" y="8" width="2" height="2" fill="#888888"/><rect x="24" y="8" width="2" height="2" fill="#9a9a9a" fill-opacity="0.55"/><rect x="2" y="10" width="2" height="2" fill="#9a9a9a" fill-opacity="0.55"/><rect x="4" y="10" width="2" height="2" fill="#888888"/><rect x="6" y="10" width="2" height="2" fill="#9a9a9a" fill-opacity="0.55"/><rect x="10" y="10" width="2" height="2" fill="#9a9a9a" fill-opacity="0.55"/><rect x="12" y="10" width="2" height="2" fill="#888888"/><rect x="14" y="10" width="2" height="2" fill="#f2f2f2"/><rect x="16" y="10" width="4" height="2" fill="#d4d4d4"/><rect x="20" y="10" width="2" height="2" fill="#888888"/><rect x="22" y="10" width="2" height="2" fill="#9a9a9a" fill-opacity="0.55"/><rect x="0" y="12" width="2" height="2" fill="#9a9a9a" fill-opacity="0.55"/><rect x="2" y="12" width="2" height="2" fill="#888888"/><rect x="4" y="12" width="2" height="2" fill="#f2f2f2"/><rect x="6" y="12" width="2" height="2" fill="#888888"/><rect x="8" y="12" width="2" height="2" fill="#9a9a9a" fill-opacity="0.55"/><rect x="10" y="12" width="2" height="2" fill="#888888"/><rect x="12" y="12" width="2" height="2" fill="#f2f2f2"/><rect x="14" y="12" width="4" height="2" fill="#d4d4d4"/><rect x="18" y="12" width="2" height="2" fill="#888888"/><rect x="20" y="12" width="2" height="2" fill="#9a9a9a" fill-opacity="0.55"/><rect x="0" y="14" width="2" height="2" fill="#888888"/><rect x="2" y="14" width="2" height="2" fill="#f2f2f2"/><rect x="4" y="14" width="4" height="2" fill="#d4d4d4"/><rect x="8" y="14" width="2" height="2" fill="#888888"/><rect x="10" y="14" width="2" height="2" fill="#f2f2f2"/><rect x="12" y="14" width="4" height="2" fill="#d4d4d4"/><rect x="16" y="14" width="2" height="2" fill="#888888"/><rect x="18" y="14" width="2" height="2" fill="#9a9a9a" fill-opacity="0.55"/><rect x="0" y="16" width="2" height="2" fill="#9a9a9a" fill-opacity="0.55"/><rect x="2" y="16" width="2" height="2" fill="#888888"/><rect x="4" y="16" width="10" height="2" fill="#d4d4d4"/><rect x="14" y="16" width="2" height="2" fill="#888888"/><rect x="16" y="16" width="2" height="2" fill="#9a9a9a" fill-opacity="0.55"/><rect x="2" y="18" width="2" height="2" fill="#9a9a9a" fill-opacity="0.55"/><rect x="4" y="18" width="2" height="2" fill="#888888"/><rect x="6" y="18" width="6" height="2" fill="#d4d4d4"/><rect x="12" y="18" width="2" height="2" fill="#888888"/><rect x="14" y="18" width="2" height="2" fill="#9a9a9a" fill-opacity="0.55"/><rect x="4" y="20" width="2" height="2" fill="#9a9a9a" fill-opacity="0.55"/><rect x="6" y="20" width="2" height="2" fill="#888888"/><rect x="8" y="20" width="2" height="2" fill="#d4d4d4"/><rect x="10" y="20" width="2" height="2" fill="#888888"/><rect x="12" y="20" width="2" height="2" fill="#9a9a9a" fill-opacity="0.55"/><rect x="6" y="22" width="2" height="2" fill="#9a9a9a" fill-opacity="0.55"/><rect x="8" y="22" width="2" height="2" fill="#888888"/><rect x="10" y="22" width="2" height="2" fill="#9a9a9a" fill-opacity="0.55"/></svg>
<svg style="left:824px;top:194px" width="28" height="24" shape-rendering="crispEdges"><rect x="20" y="0" width="2" height="2" fill="#9a9a9a" fill-opacity="0.55"/><rect x="22" y="0" width="4" height="2" fill="#888888"/><rect x="26" y="0" width="2" height="2" fill="#9a9a9a" fill-opacity="0.55"/><rect x="18" y="2" width="2" height="2" fill="#9a9a9a" fill-opacity="0.55"/><rect x="20" y="2" width="2" height="2" fill="#888888"/><rect x="22" y="2" width="2" height="2" fill="#f2f2f2"/><rect x="24" y="2" width="2" height="2" fill="#d4d4d4"/><rect x="26" y="2" width="2" height="2" fill="#888888"/><rect x="16" y="4" width="2" height="2" fill="#9a9a9a" fill-opacity="0.55"/><rect x="18" y="4" width="2" height="2" fill="#888888"/><rect x="20" y="4" width="2" height="2" fill="#f2f2f2"/><rect x="22" y="4" width="4" height="2" fill="#d4d4d4"/><rect x="26" y="4" width="2" height="2" fill="#888888"/><rect x="14" y="6" width="2" height="2" fill="#9a9a9a" fill-opacity="0.55"/><rect x="16" y="6" width="2" height="2" fill="#888888"/><rect x="18" y="6" width="2" height="2" fill="#f2f2f2"/><rect x="20" y="6" width="4" height="2" fill="#d4d4d4"/><rect x="24" y="6" width="2" height="2" fill="#888888"/><rect x="26" y="6" width="2" height="2" fill="#9a9a9a" fill-opacity="0.55"/><rect x="12" y="8" width="2" height="2" fill="#9a9a9a" fill-opacity="0.55"/><rect x="14" y="8" width="2" height="2" fill="#888888"/><rect x="16" y="8" width="2" height="2" fill="#f2f2f2"/><rect x="18" y="8" width="4" height="2" fill="#d4d4d4"/><rect x="22" y="8" width="2" height="2" fill="#888888"/><rect x="24" y="8" width="2" height="2" fill="#9a9a9a" fill-opacity="0.55"/><rect x="2" y="10" width="2" height="2" fill="#9a9a9a" fill-opacity="0.55"/><rect x="4" y="10" width="2" height="2" fill="#888888"/><rect x="6" y="10" width="2" height="2" fill="#9a9a9a" fill-opacity="0.55"/><rect x="10" y="10" width="2" height="2" fill="#9a9a9a" fill-opacity="0.55"/><rect x="12" y="10" width="2" height="2" fill="#888888"/><rect x="14" y="10" width="2" height="2" fill="#f2f2f2"/><rect x="16" y="10" width="4" height="2" fill="#d4d4d4"/><rect x="20" y="10" width="2" height="2" fill="#888888"/><rect x="22" y="10" width="2" height="2" fill="#9a9a9a" fill-opacity="0.55"/><rect x="0" y="12" width="2" height="2" fill="#9a9a9a" fill-opacity="0.55"/><rect x="2" y="12" width="2" height="2" fill="#888888"/><rect x="4" y="12" width="2" height="2" fill="#f2f2f2"/><rect x="6" y="12" width="2" height="2" fill="#888888"/><rect x="8" y="12" width="2" height="2" fill="#9a9a9a" fill-opacity="0.55"/><rect x="10" y="12" width="2" height="2" fill="#888888"/><rect x="12" y="12" width="2" height="2" fill="#f2f2f2"/><rect x="14" y="12" width="4" height="2" fill="#d4d4d4"/><rect x="18" y="12" width="2" height="2" fill="#888888"/><rect x="20" y="12" width="2" height="2" fill="#9a9a9a" fill-opacity="0.55"/><rect x="0" y="14" width="2" height="2" fill="#888888"/><rect x="2" y="14" width="2" height="2" fill="#f2f2f2"/><rect x="4" y="14" width="4" height="2" fill="#d4d4d4"/><rect x="8" y="14" width="2" height="2" fill="#888888"/><rect x="10" y="14" width="2" height="2" fill="#f2f2f2"/><rect x="12" y="14" width="4" height="2" fill="#d4d4d4"/><rect x="16" y="14" width="2" height="2" fill="#888888"/><rect x="18" y="14" width="2" height="2" fill="#9a9a9a" fill-opacity="0.55"/><rect x="0" y="16" width="2" height="2" fill="#9a9a9a" fill-opacity="0.55"/><rect x="2" y="16" width="2" height="2" fill="#888888"/><rect x="4" y="16" width="10" height="2" fill="#d4d4d4"/><rect x="14" y="16" width="2" height="2" fill="#888888"/><rect x="16" y="16" width="2" height="2" fill="#9a9a9a" fill-opacity="0.55"/><rect x="2" y="18" width="2" height="2" fill="#9a9a9a" fill-opacity="0.55"/><rect x="4" y="18" width="2" height="2" fill="#888888"/><rect x="6" y="18" width="6" height="2" fill="#d4d4d4"/><rect x="12" y="18" width="2" height="2" fill="#888888"/><rect x="14" y="18" width="2" height="2" fill="#9a9a9a" fill-opacity="0.55"/><rect x="4" y="20" width="2" height="2" fill="#9a9a9a" fill-opacity="0.55"/><rect x="6" y="20" width="2" height="2" fill="#888888"/><rect x="8" y="20" width="2" height="2" fill="#d4d4d4"/><rect x="10" y="20" width="2" height="2" fill="#888888"/><rect x="12" y="20" width="2" height="2" fill="#9a9a9a" fill-opacity="0.55"/><rect x="6" y="22" width="2" height="2" fill="#9a9a9a" fill-opacity="0.55"/><rect x="8" y="22" width="2" height="2" fill="#888888"/><rect x="10" y="22" width="2" height="2" fill="#9a9a9a" fill-opacity="0.55"/></svg>
<div class="sep" style="left:812px;top:193px;height:26px"></div>
<div class="sep" style="left:860px;top:193px;height:26px"></div>
<div class="htxt" style="left:871px;top:191px">源文</div>
<div class="a" style="left:765px;top:224px;width:555px;height:40px;background:#d4d4d4"></div>
<div class="a" style="left:765px;top:264px;width:49px;height:160px;background:#ebf2fe"></div>
<div class="a" style="left:814px;top:264px;width:48px;height:160px;background:#e7fefe"></div>
<svg style="left:782px;top:228px" width="20" height="30" shape-rendering="crispEdges"><rect x="4" y="0" width="2" height="2" fill="#0c1c24" fill-opacity="0.45"/><rect x="6" y="0" width="8" height="2" fill="#0c1c24"/><rect x="14" y="0" width="2" height="2" fill="#0c1c24" fill-opacity="0.45"/><rect x="2" y="2" width="2" height="2" fill="#0c1c24" fill-opacity="0.45"/><rect x="4" y="2" width="2" height="2" fill="#0c1c24"/><rect x="6" y="2" width="4" height="2" fill="#b8e0ec"/><rect x="10" y="2" width="4" height="2" fill="#4a8c9c"/><rect x="14" y="2" width="2" height="2" fill="#0c1c24"/><rect x="16" y="2" width="2" height="2" fill="#0c1c24" fill-opacity="0.45"/><rect x="2" y="4" width="2" height="2" fill="#0c1c24"/><rect x="4" y="4" width="2" height="2" fill="#b8e0ec"/><rect x="6" y="4" width="10" height="2" fill="#4a8c9c"/><rect x="16" y="4" width="2" height="2" fill="#0c1c24"/><rect x="0" y="6" width="2" height="2" fill="#0c1c24" fill-opacity="0.45"/><rect x="2" y="6" width="2" height="2" fill="#0c1c24"/><rect x="4" y="6" width="4" height="2" fill="#4a8c9c"/><rect x="8" y="6" width="4" height="2" fill="#0c1c24"/><rect x="12" y="6" width="4" height="2" fill="#4a8c9c"/><rect x="16" y="6" width="2" height="2" fill="#0c1c24"/><rect x="18" y="6" width="2" height="2" fill="#0c1c24" fill-opacity="0.45"/><rect x="2" y="8" width="2" height="2" fill="#0c1c24" fill-opacity="0.45"/><rect x="4" y="8" width="4" height="2" fill="#0c1c24"/><rect x="8" y="8" width="2" height="2" fill="#0c1c24" fill-opacity="0.45"/><rect x="10" y="8" width="2" height="2" fill="#0c1c24"/><rect x="12" y="8" width="2" height="2" fill="#b8e0ec"/><rect x="14" y="8" width="2" height="2" fill="#4a8c9c"/><rect x="16" y="8" width="2" height="2" fill="#0c1c24"/><rect x="8" y="10" width="2" height="2" fill="#0c1c24"/><rect x="10" y="10" width="2" height="2" fill="#b8e0ec"/><rect x="12" y="10" width="4" height="2" fill="#4a8c9c"/><rect x="16" y="10" width="2" height="2" fill="#0c1c24"/><rect x="6" y="12" width="2" height="2" fill="#0c1c24" fill-opacity="0.45"/><rect x="8" y="12" width="2" height="2" fill="#0c1c24"/><rect x="10" y="12" width="2" height="2" fill="#b8e0ec"/><rect x="12" y="12" width="2" height="2" fill="#4a8c9c"/><rect x="14" y="12" width="2" height="2" fill="#0c1c24"/><rect x="16" y="12" width="2" height="2" fill="#0c1c24" fill-opacity="0.45"/><rect x="6" y="14" width="2" height="2" fill="#0c1c24"/><rect x="8" y="14" width="2" height="2" fill="#b8e0ec"/><rect x="10" y="14" width="4" height="2" fill="#4a8c9c"/><rect x="14" y="14" width="2" height="2" fill="#0c1c24"/><rect x="6" y="16" width="2" height="2" fill="#0c1c24"/><rect x="8" y="16" width="4" height="2" fill="#4a8c9c"/><rect x="12" y="16" width="2" height="2" fill="#0c1c24"/><rect x="6" y="18" width="2" height="2" fill="#0c1c24"/><rect x="8" y="18" width="4" height="2" fill="#4a8c9c"/><rect x="12" y="18" width="2" height="2" fill="#0c1c24"/><rect x="6" y="20" width="2" height="2" fill="#0c1c24" fill-opacity="0.45"/><rect x="8" y="20" width="4" height="2" fill="#0c1c24"/><rect x="12" y="20" width="2" height="2" fill="#0c1c24" fill-opacity="0.45"/><rect x="4" y="22" width="2" height="2" fill="#0c1c24" fill-opacity="0.45"/><rect x="6" y="22" width="2" height="2" fill="#0c1c24"/><rect x="8" y="22" width="4" height="2" fill="#4a8c9c"/><rect x="12" y="22" width="2" height="2" fill="#0c1c24"/><rect x="14" y="22" width="2" height="2" fill="#0c1c24" fill-opacity="0.45"/><rect x="4" y="24" width="2" height="2" fill="#0c1c24"/><rect x="6" y="24" width="2" height="2" fill="#b8e0ec"/><rect x="8" y="24" width="6" height="2" fill="#4a8c9c"/><rect x="14" y="24" width="2" height="2" fill="#0c1c24"/><rect x="4" y="26" width="2" height="2" fill="#0c1c24"/><rect x="6" y="26" width="8" height="2" fill="#4a8c9c"/><rect x="14" y="26" width="2" height="2" fill="#0c1c24"/><rect x="4" y="28" width="2" height="2" fill="#0c1c24" fill-opacity="0.45"/><rect x="6" y="28" width="8" height="2" fill="#0c1c24"/><rect x="14" y="28" width="2" height="2" fill="#0c1c24" fill-opacity="0.45"/></svg>
<svg style="left:826px;top:234px" width="28" height="24" shape-rendering="crispEdges"><rect x="20" y="0" width="2" height="2" fill="#000" fill-opacity="0.45"/><rect x="22" y="0" width="4" height="2" fill="#000"/><rect x="26" y="0" width="2" height="2" fill="#000" fill-opacity="0.45"/><rect x="18" y="2" width="2" height="2" fill="#000" fill-opacity="0.45"/><rect x="20" y="2" width="2" height="2" fill="#000"/><rect x="22" y="2" width="2" height="2" fill="#9cf89c"/><rect x="24" y="2" width="2" height="2" fill="#00e000"/><rect x="26" y="2" width="2" height="2" fill="#000"/><rect x="16" y="4" width="2" height="2" fill="#000" fill-opacity="0.45"/><rect x="18" y="4" width="2" height="2" fill="#000"/><rect x="20" y="4" width="2" height="2" fill="#9cf89c"/><rect x="22" y="4" width="4" height="2" fill="#00e000"/><rect x="26" y="4" width="2" height="2" fill="#000"/><rect x="14" y="6" width="2" height="2" fill="#000" fill-opacity="0.45"/><rect x="16" y="6" width="2" height="2" fill="#000"/><rect x="18" y="6" width="2" height="2" fill="#9cf89c"/><rect x="20" y="6" width="4" height="2" fill="#00e000"/><rect x="24" y="6" width="2" height="2" fill="#000"/><rect x="26" y="6" width="2" height="2" fill="#000" fill-opacity="0.45"/><rect x="12" y="8" width="2" height="2" fill="#000" fill-opacity="0.45"/><rect x="14" y="8" width="2" height="2" fill="#000"/><rect x="16" y="8" width="2" height="2" fill="#9cf89c"/><rect x="18" y="8" width="4" height="2" fill="#00e000"/><rect x="22" y="8" width="2" height="2" fill="#000"/><rect x="24" y="8" width="2" height="2" fill="#000" fill-opacity="0.45"/><rect x="2" y="10" width="2" height="2" fill="#000" fill-opacity="0.45"/><rect x="4" y="10" width="2" height="2" fill="#000"/><rect x="6" y="10" width="2" height="2" fill="#000" fill-opacity="0.45"/><rect x="10" y="10" width="2" height="2" fill="#000" fill-opacity="0.45"/><rect x="12" y="10" width="2" height="2" fill="#000"/><rect x="14" y="10" width="2" height="2" fill="#9cf89c"/><rect x="16" y="10" width="4" height="2" fill="#00e000"/><rect x="20" y="10" width="2" height="2" fill="#000"/><rect x="22" y="10" width="2" height="2" fill="#000" fill-opacity="0.45"/><rect x="0" y="12" width="2" height="2" fill="#000" fill-opacity="0.45"/><rect x="2" y="12" width="2" height="2" fill="#000"/><rect x="4" y="12" width="2" height="2" fill="#9cf89c"/><rect x="6" y="12" width="2" height="2" fill="#000"/><rect x="8" y="12" width="2" height="2" fill="#000" fill-opacity="0.45"/><rect x="10" y="12" width="2" height="2" fill="#000"/><rect x="12" y="12" width="2" height="2" fill="#9cf89c"/><rect x="14" y="12" width="4" height="2" fill="#00e000"/><rect x="18" y="12" width="2" height="2" fill="#000"/><rect x="20" y="12" width="2" height="2" fill="#000" fill-opacity="0.45"/><rect x="0" y="14" width="2" height="2" fill="#000"/><rect x="2" y="14" width="2" height="2" fill="#9cf89c"/><rect x="4" y="14" width="4" height="2" fill="#00e000"/><rect x="8" y="14" width="2" height="2" fill="#000"/><rect x="10" y="14" width="2" height="2" fill="#9cf89c"/><rect x="12" y="14" width="4" height="2" fill="#00e000"/><rect x="16" y="14" width="2" height="2" fill="#000"/><rect x="18" y="14" width="2" height="2" fill="#000" fill-opacity="0.45"/><rect x="0" y="16" width="2" height="2" fill="#000" fill-opacity="0.45"/><rect x="2" y="16" width="2" height="2" fill="#000"/><rect x="4" y="16" width="10" height="2" fill="#00e000"/><rect x="14" y="16" width="2" height="2" fill="#000"/><rect x="16" y="16" width="2" height="2" fill="#000" fill-opacity="0.45"/><rect x="2" y="18" width="2" height="2" fill="#000" fill-opacity="0.45"/><rect x="4" y="18" width="2" height="2" fill="#000"/><rect x="6" y="18" width="6" height="2" fill="#00e000"/><rect x="12" y="18" width="2" height="2" fill="#000"/><rect x="14" y="18" width="2" height="2" fill="#000" fill-opacity="0.45"/><rect x="4" y="20" width="2" height="2" fill="#000" fill-opacity="0.45"/><rect x="6" y="20" width="2" height="2" fill="#000"/><rect x="8" y="20" width="2" height="2" fill="#00e000"/><rect x="10" y="20" width="2" height="2" fill="#000"/><rect x="12" y="20" width="2" height="2" fill="#000" fill-opacity="0.45"/><rect x="6" y="22" width="2" height="2" fill="#000" fill-opacity="0.45"/><rect x="8" y="22" width="2" height="2" fill="#000"/><rect x="10" y="22" width="2" height="2" fill="#000" fill-opacity="0.45"/></svg>
<div class="txt" style="left:872px;top:229px">MainWindow</div>
<svg style="left:778px;top:274px" width="28" height="24" shape-rendering="crispEdges"><rect x="20" y="0" width="2" height="2" fill="#000" fill-opacity="0.45"/><rect x="22" y="0" width="4" height="2" fill="#000"/><rect x="26" y="0" width="2" height="2" fill="#000" fill-opacity="0.45"/><rect x="18" y="2" width="2" height="2" fill="#000" fill-opacity="0.45"/><rect x="20" y="2" width="2" height="2" fill="#000"/><rect x="22" y="2" width="2" height="2" fill="#9cf89c"/><rect x="24" y="2" width="2" height="2" fill="#00e000"/><rect x="26" y="2" width="2" height="2" fill="#000"/><rect x="16" y="4" width="2" height="2" fill="#000" fill-opacity="0.45"/><rect x="18" y="4" width="2" height="2" fill="#000"/><rect x="20" y="4" width="2" height="2" fill="#9cf89c"/><rect x="22" y="4" width="4" height="2" fill="#00e000"/><rect x="26" y="4" width="2" height="2" fill="#000"/><rect x="14" y="6" width="2" height="2" fill="#000" fill-opacity="0.45"/><rect x="16" y="6" width="2" height="2" fill="#000"/><rect x="18" y="6" width="2" height="2" fill="#9cf89c"/><rect x="20" y="6" width="4" height="2" fill="#00e000"/><rect x="24" y="6" width="2" height="2" fill="#000"/><rect x="26" y="6" width="2" height="2" fill="#000" fill-opacity="0.45"/><rect x="12" y="8" width="2" height="2" fill="#000" fill-opacity="0.45"/><rect x="14" y="8" width="2" height="2" fill="#000"/><rect x="16" y="8" width="2" height="2" fill="#9cf89c"/><rect x="18" y="8" width="4" height="2" fill="#00e000"/><rect x="22" y="8" width="2" height="2" fill="#000"/><rect x="24" y="8" width="2" height="2" fill="#000" fill-opacity="0.45"/><rect x="2" y="10" width="2" height="2" fill="#000" fill-opacity="0.45"/><rect x="4" y="10" width="2" height="2" fill="#000"/><rect x="6" y="10" width="2" height="2" fill="#000" fill-opacity="0.45"/><rect x="10" y="10" width="2" height="2" fill="#000" fill-opacity="0.45"/><rect x="12" y="10" width="2" height="2" fill="#000"/><rect x="14" y="10" width="2" height="2" fill="#9cf89c"/><rect x="16" y="10" width="4" height="2" fill="#00e000"/><rect x="20" y="10" width="2" height="2" fill="#000"/><rect x="22" y="10" width="2" height="2" fill="#000" fill-opacity="0.45"/><rect x="0" y="12" width="2" height="2" fill="#000" fill-opacity="0.45"/><rect x="2" y="12" width="2" height="2" fill="#000"/><rect x="4" y="12" width="2" height="2" fill="#9cf89c"/><rect x="6" y="12" width="2" height="2" fill="#000"/><rect x="8" y="12" width="2" height="2" fill="#000" fill-opacity="0.45"/><rect x="10" y="12" width="2" height="2" fill="#000"/><rect x="12" y="12" width="2" height="2" fill="#9cf89c"/><rect x="14" y="12" width="4" height="2" fill="#00e000"/><rect x="18" y="12" width="2" height="2" fill="#000"/><rect x="20" y="12" width="2" height="2" fill="#000" fill-opacity="0.45"/><rect x="0" y="14" width="2" height="2" fill="#000"/><rect x="2" y="14" width="2" height="2" fill="#9cf89c"/><rect x="4" y="14" width="4" height="2" fill="#00e000"/><rect x="8" y="14" width="2" height="2" fill="#000"/><rect x="10" y="14" width="2" height="2" fill="#9cf89c"/><rect x="12" y="14" width="4" height="2" fill="#00e000"/><rect x="16" y="14" width="2" height="2" fill="#000"/><rect x="18" y="14" width="2" height="2" fill="#000" fill-opacity="0.45"/><rect x="0" y="16" width="2" height="2" fill="#000" fill-opacity="0.45"/><rect x="2" y="16" width="2" height="2" fill="#000"/><rect x="4" y="16" width="10" height="2" fill="#00e000"/><rect x="14" y="16" width="2" height="2" fill="#000"/><rect x="16" y="16" width="2" height="2" fill="#000" fill-opacity="0.45"/><rect x="2" y="18" width="2" height="2" fill="#000" fill-opacity="0.45"/><rect x="4" y="18" width="2" height="2" fill="#000"/><rect x="6" y="18" width="6" height="2" fill="#00e000"/><rect x="12" y="18" width="2" height="2" fill="#000"/><rect x="14" y="18" width="2" height="2" fill="#000" fill-opacity="0.45"/><rect x="4" y="20" width="2" height="2" fill="#000" fill-opacity="0.45"/><rect x="6" y="20" width="2" height="2" fill="#000"/><rect x="8" y="20" width="2" height="2" fill="#00e000"/><rect x="10" y="20" width="2" height="2" fill="#000"/><rect x="12" y="20" width="2" height="2" fill="#000" fill-opacity="0.45"/><rect x="6" y="22" width="2" height="2" fill="#000" fill-opacity="0.45"/><rect x="8" y="22" width="2" height="2" fill="#000"/><rect x="10" y="22" width="2" height="2" fill="#000" fill-opacity="0.45"/></svg>
<svg style="left:830px;top:268px" width="20" height="30" shape-rendering="crispEdges"><rect x="4" y="0" width="2" height="2" fill="#0c1c24" fill-opacity="0.45"/><rect x="6" y="0" width="8" height="2" fill="#0c1c24"/><rect x="14" y="0" width="2" height="2" fill="#0c1c24" fill-opacity="0.45"/><rect x="2" y="2" width="2" height="2" fill="#0c1c24" fill-opacity="0.45"/><rect x="4" y="2" width="2" height="2" fill="#0c1c24"/><rect x="6" y="2" width="4" height="2" fill="#b8e0ec"/><rect x="10" y="2" width="4" height="2" fill="#4a8c9c"/><rect x="14" y="2" width="2" height="2" fill="#0c1c24"/><rect x="16" y="2" width="2" height="2" fill="#0c1c24" fill-opacity="0.45"/><rect x="2" y="4" width="2" height="2" fill="#0c1c24"/><rect x="4" y="4" width="2" height="2" fill="#b8e0ec"/><rect x="6" y="4" width="10" height="2" fill="#4a8c9c"/><rect x="16" y="4" width="2" height="2" fill="#0c1c24"/><rect x="0" y="6" width="2" height="2" fill="#0c1c24" fill-opacity="0.45"/><rect x="2" y="6" width="2" height="2" fill="#0c1c24"/><rect x="4" y="6" width="4" height="2" fill="#4a8c9c"/><rect x="8" y="6" width="4" height="2" fill="#0c1c24"/><rect x="12" y="6" width="4" height="2" fill="#4a8c9c"/><rect x="16" y="6" width="2" height="2" fill="#0c1c24"/><rect x="18" y="6" width="2" height="2" fill="#0c1c24" fill-opacity="0.45"/><rect x="2" y="8" width="2" height="2" fill="#0c1c24" fill-opacity="0.45"/><rect x="4" y="8" width="4" height="2" fill="#0c1c24"/><rect x="8" y="8" width="2" height="2" fill="#0c1c24" fill-opacity="0.45"/><rect x="10" y="8" width="2" height="2" fill="#0c1c24"/><rect x="12" y="8" width="2" height="2" fill="#b8e0ec"/><rect x="14" y="8" width="2" height="2" fill="#4a8c9c"/><rect x="16" y="8" width="2" height="2" fill="#0c1c24"/><rect x="8" y="10" width="2" height="2" fill="#0c1c24"/><rect x="10" y="10" width="2" height="2" fill="#b8e0ec"/><rect x="12" y="10" width="4" height="2" fill="#4a8c9c"/><rect x="16" y="10" width="2" height="2" fill="#0c1c24"/><rect x="6" y="12" width="2" height="2" fill="#0c1c24" fill-opacity="0.45"/><rect x="8" y="12" width="2" height="2" fill="#0c1c24"/><rect x="10" y="12" width="2" height="2" fill="#b8e0ec"/><rect x="12" y="12" width="2" height="2" fill="#4a8c9c"/><rect x="14" y="12" width="2" height="2" fill="#0c1c24"/><rect x="16" y="12" width="2" height="2" fill="#0c1c24" fill-opacity="0.45"/><rect x="6" y="14" width="2" height="2" fill="#0c1c24"/><rect x="8" y="14" width="2" height="2" fill="#b8e0ec"/><rect x="10" y="14" width="4" height="2" fill="#4a8c9c"/><rect x="14" y="14" width="2" height="2" fill="#0c1c24"/><rect x="6" y="16" width="2" height="2" fill="#0c1c24"/><rect x="8" y="16" width="4" height="2" fill="#4a8c9c"/><rect x="12" y="16" width="2" height="2" fill="#0c1c24"/><rect x="6" y="18" width="2" height="2" fill="#0c1c24"/><rect x="8" y="18" width="4" height="2" fill="#4a8c9c"/><rect x="12" y="18" width="2" height="2" fill="#0c1c24"/><rect x="6" y="20" width="2" height="2" fill="#0c1c24" fill-opacity="0.45"/><rect x="8" y="20" width="4" height="2" fill="#0c1c24"/><rect x="12" y="20" width="2" height="2" fill="#0c1c24" fill-opacity="0.45"/><rect x="4" y="22" width="2" height="2" fill="#0c1c24" fill-opacity="0.45"/><rect x="6" y="22" width="2" height="2" fill="#0c1c24"/><rect x="8" y="22" width="4" height="2" fill="#4a8c9c"/><rect x="12" y="22" width="2" height="2" fill="#0c1c24"/><rect x="14" y="22" width="2" height="2" fill="#0c1c24" fill-opacity="0.45"/><rect x="4" y="24" width="2" height="2" fill="#0c1c24"/><rect x="6" y="24" width="2" height="2" fill="#b8e0ec"/><rect x="8" y="24" width="6" height="2" fill="#4a8c9c"/><rect x="14" y="24" width="2" height="2" fill="#0c1c24"/><rect x="4" y="26" width="2" height="2" fill="#0c1c24"/><rect x="6" y="26" width="8" height="2" fill="#4a8c9c"/><rect x="14" y="26" width="2" height="2" fill="#0c1c24"/><rect x="4" y="28" width="2" height="2" fill="#0c1c24" fill-opacity="0.45"/><rect x="6" y="28" width="8" height="2" fill="#0c1c24"/><rect x="14" y="28" width="2" height="2" fill="#0c1c24" fill-opacity="0.45"/></svg>
<div class="txt" style="left:872px;top:267px">按钮</div>
<svg style="left:778px;top:314px" width="28" height="24" shape-rendering="crispEdges"><rect x="20" y="0" width="2" height="2" fill="#000" fill-opacity="0.45"/><rect x="22" y="0" width="4" height="2" fill="#000"/><rect x="26" y="0" width="2" height="2" fill="#000" fill-opacity="0.45"/><rect x="18" y="2" width="2" height="2" fill="#000" fill-opacity="0.45"/><rect x="20" y="2" width="2" height="2" fill="#000"/><rect x="22" y="2" width="2" height="2" fill="#9cf89c"/><rect x="24" y="2" width="2" height="2" fill="#00e000"/><rect x="26" y="2" width="2" height="2" fill="#000"/><rect x="16" y="4" width="2" height="2" fill="#000" fill-opacity="0.45"/><rect x="18" y="4" width="2" height="2" fill="#000"/><rect x="20" y="4" width="2" height="2" fill="#9cf89c"/><rect x="22" y="4" width="4" height="2" fill="#00e000"/><rect x="26" y="4" width="2" height="2" fill="#000"/><rect x="14" y="6" width="2" height="2" fill="#000" fill-opacity="0.45"/><rect x="16" y="6" width="2" height="2" fill="#000"/><rect x="18" y="6" width="2" height="2" fill="#9cf89c"/><rect x="20" y="6" width="4" height="2" fill="#00e000"/><rect x="24" y="6" width="2" height="2" fill="#000"/><rect x="26" y="6" width="2" height="2" fill="#000" fill-opacity="0.45"/><rect x="12" y="8" width="2" height="2" fill="#000" fill-opacity="0.45"/><rect x="14" y="8" width="2" height="2" fill="#000"/><rect x="16" y="8" width="2" height="2" fill="#9cf89c"/><rect x="18" y="8" width="4" height="2" fill="#00e000"/><rect x="22" y="8" width="2" height="2" fill="#000"/><rect x="24" y="8" width="2" height="2" fill="#000" fill-opacity="0.45"/><rect x="2" y="10" width="2" height="2" fill="#000" fill-opacity="0.45"/><rect x="4" y="10" width="2" height="2" fill="#000"/><rect x="6" y="10" width="2" height="2" fill="#000" fill-opacity="0.45"/><rect x="10" y="10" width="2" height="2" fill="#000" fill-opacity="0.45"/><rect x="12" y="10" width="2" height="2" fill="#000"/><rect x="14" y="10" width="2" height="2" fill="#9cf89c"/><rect x="16" y="10" width="4" height="2" fill="#00e000"/><rect x="20" y="10" width="2" height="2" fill="#000"/><rect x="22" y="10" width="2" height="2" fill="#000" fill-opacity="0.45"/><rect x="0" y="12" width="2" height="2" fill="#000" fill-opacity="0.45"/><rect x="2" y="12" width="2" height="2" fill="#000"/><rect x="4" y="12" width="2" height="2" fill="#9cf89c"/><rect x="6" y="12" width="2" height="2" fill="#000"/><rect x="8" y="12" width="2" height="2" fill="#000" fill-opacity="0.45"/><rect x="10" y="12" width="2" height="2" fill="#000"/><rect x="12" y="12" width="2" height="2" fill="#9cf89c"/><rect x="14" y="12" width="4" height="2" fill="#00e000"/><rect x="18" y="12" width="2" height="2" fill="#000"/><rect x="20" y="12" width="2" height="2" fill="#000" fill-opacity="0.45"/><rect x="0" y="14" width="2" height="2" fill="#000"/><rect x="2" y="14" width="2" height="2" fill="#9cf89c"/><rect x="4" y="14" width="4" height="2" fill="#00e000"/><rect x="8" y="14" width="2" height="2" fill="#000"/><rect x="10" y="14" width="2" height="2" fill="#9cf89c"/><rect x="12" y="14" width="4" height="2" fill="#00e000"/><rect x="16" y="14" width="2" height="2" fill="#000"/><rect x="18" y="14" width="2" height="2" fill="#000" fill-opacity="0.45"/><rect x="0" y="16" width="2" height="2" fill="#000" fill-opacity="0.45"/><rect x="2" y="16" width="2" height="2" fill="#000"/><rect x="4" y="16" width="10" height="2" fill="#00e000"/><rect x="14" y="16" width="2" height="2" fill="#000"/><rect x="16" y="16" width="2" height="2" fill="#000" fill-opacity="0.45"/><rect x="2" y="18" width="2" height="2" fill="#000" fill-opacity="0.45"/><rect x="4" y="18" width="2" height="2" fill="#000"/><rect x="6" y="18" width="6" height="2" fill="#00e000"/><rect x="12" y="18" width="2" height="2" fill="#000"/><rect x="14" y="18" width="2" height="2" fill="#000" fill-opacity="0.45"/><rect x="4" y="20" width="2" height="2" fill="#000" fill-opacity="0.45"/><rect x="6" y="20" width="2" height="2" fill="#000"/><rect x="8" y="20" width="2" height="2" fill="#00e000"/><rect x="10" y="20" width="2" height="2" fill="#000"/><rect x="12" y="20" width="2" height="2" fill="#000" fill-opacity="0.45"/><rect x="6" y="22" width="2" height="2" fill="#000" fill-opacity="0.45"/><rect x="8" y="22" width="2" height="2" fill="#000"/><rect x="10" y="22" width="2" height="2" fill="#000" fill-opacity="0.45"/></svg>
<svg style="left:830px;top:308px" width="20" height="30" shape-rendering="crispEdges"><rect x="4" y="0" width="2" height="2" fill="#1c1c20" fill-opacity="0.45"/><rect x="6" y="0" width="8" height="2" fill="#1c1c20"/><rect x="14" y="0" width="2" height="2" fill="#1c1c20" fill-opacity="0.45"/><rect x="2" y="2" width="2" height="2" fill="#1c1c20" fill-opacity="0.45"/><rect x="4" y="2" width="2" height="2" fill="#1c1c20"/><rect x="6" y="2" width="4" height="2" fill="#fff0a0"/><rect x="10" y="2" width="4" height="2" fill="#f0b818"/><rect x="14" y="2" width="2" height="2" fill="#1c1c20"/><rect x="16" y="2" width="2" height="2" fill="#1c1c20" fill-opacity="0.45"/><rect x="2" y="4" width="2" height="2" fill="#1c1c20"/><rect x="4" y="4" width="2" height="2" fill="#fff0a0"/><rect x="6" y="4" width="10" height="2" fill="#f0b818"/><rect x="16" y="4" width="2" height="2" fill="#1c1c20"/><rect x="0" y="6" width="2" height="2" fill="#1c1c20" fill-opacity="0.45"/><rect x="2" y="6" width="2" height="2" fill="#1c1c20"/><rect x="4" y="6" width="4" height="2" fill="#f0b818"/><rect x="8" y="6" width="4" height="2" fill="#1c1c20"/><rect x="12" y="6" width="4" height="2" fill="#f0b818"/><rect x="16" y="6" width="2" height="2" fill="#1c1c20"/><rect x="18" y="6" width="2" height="2" fill="#1c1c20" fill-opacity="0.45"/><rect x="2" y="8" width="2" height="2" fill="#1c1c20" fill-opacity="0.45"/><rect x="4" y="8" width="4" height="2" fill="#1c1c20"/><rect x="8" y="8" width="2" height="2" fill="#1c1c20" fill-opacity="0.45"/><rect x="10" y="8" width="2" height="2" fill="#1c1c20"/><rect x="12" y="8" width="2" height="2" fill="#fff0a0"/><rect x="14" y="8" width="2" height="2" fill="#f0b818"/><rect x="16" y="8" width="2" height="2" fill="#1c1c20"/><rect x="8" y="10" width="2" height="2" fill="#1c1c20"/><rect x="10" y="10" width="2" height="2" fill="#fff0a0"/><rect x="12" y="10" width="4" height="2" fill="#f0b818"/><rect x="16" y="10" width="2" height="2" fill="#1c1c20"/><rect x="6" y="12" width="2" height="2" fill="#1c1c20" fill-opacity="0.45"/><rect x="8" y="12" width="2" height="2" fill="#1c1c20"/><rect x="10" y="12" width="2" height="2" fill="#fff0a0"/><rect x="12" y="12" width="2" height="2" fill="#f0b818"/><rect x="14" y="12" width="2" height="2" fill="#1c1c20"/><rect x="16" y="12" width="2" height="2" fill="#1c1c20" fill-opacity="0.45"/><rect x="6" y="14" width="2" height="2" fill="#1c1c20"/><rect x="8" y="14" width="2" height="2" fill="#fff0a0"/><rect x="10" y="14" width="4" height="2" fill="#f0b818"/><rect x="14" y="14" width="2" height="2" fill="#1c1c20"/><rect x="6" y="16" width="2" height="2" fill="#1c1c20"/><rect x="8" y="16" width="4" height="2" fill="#f0b818"/><rect x="12" y="16" width="2" height="2" fill="#1c1c20"/><rect x="6" y="18" width="2" height="2" fill="#1c1c20"/><rect x="8" y="18" width="4" height="2" fill="#f0b818"/><rect x="12" y="18" width="2" height="2" fill="#1c1c20"/><rect x="6" y="20" width="2" height="2" fill="#1c1c20" fill-opacity="0.45"/><rect x="8" y="20" width="4" height="2" fill="#1c1c20"/><rect x="12" y="20" width="2" height="2" fill="#1c1c20" fill-opacity="0.45"/><rect x="4" y="22" width="2" height="2" fill="#1c1c20" fill-opacity="0.45"/><rect x="6" y="22" width="2" height="2" fill="#1c1c20"/><rect x="8" y="22" width="4" height="2" fill="#f0b818"/><rect x="12" y="22" width="2" height="2" fill="#1c1c20"/><rect x="14" y="22" width="2" height="2" fill="#1c1c20" fill-opacity="0.45"/><rect x="4" y="24" width="2" height="2" fill="#1c1c20"/><rect x="6" y="24" width="2" height="2" fill="#fff0a0"/><rect x="8" y="24" width="6" height="2" fill="#f0b818"/><rect x="14" y="24" width="2" height="2" fill="#1c1c20"/><rect x="4" y="26" width="2" height="2" fill="#1c1c20"/><rect x="6" y="26" width="8" height="2" fill="#f0b818"/><rect x="14" y="26" width="2" height="2" fill="#1c1c20"/><rect x="4" y="28" width="2" height="2" fill="#1c1c20" fill-opacity="0.45"/><rect x="6" y="28" width="8" height="2" fill="#1c1c20"/><rect x="14" y="28" width="2" height="2" fill="#1c1c20" fill-opacity="0.45"/></svg>
<div class="txt" style="left:872px;top:307px">按钮2</div>
<svg style="left:778px;top:354px" width="28" height="24" shape-rendering="crispEdges"><rect x="20" y="0" width="2" height="2" fill="#000" fill-opacity="0.45"/><rect x="22" y="0" width="4" height="2" fill="#000"/><rect x="26" y="0" width="2" height="2" fill="#000" fill-opacity="0.45"/><rect x="18" y="2" width="2" height="2" fill="#000" fill-opacity="0.45"/><rect x="20" y="2" width="2" height="2" fill="#000"/><rect x="22" y="2" width="2" height="2" fill="#9cf89c"/><rect x="24" y="2" width="2" height="2" fill="#00e000"/><rect x="26" y="2" width="2" height="2" fill="#000"/><rect x="16" y="4" width="2" height="2" fill="#000" fill-opacity="0.45"/><rect x="18" y="4" width="2" height="2" fill="#000"/><rect x="20" y="4" width="2" height="2" fill="#9cf89c"/><rect x="22" y="4" width="4" height="2" fill="#00e000"/><rect x="26" y="4" width="2" height="2" fill="#000"/><rect x="14" y="6" width="2" height="2" fill="#000" fill-opacity="0.45"/><rect x="16" y="6" width="2" height="2" fill="#000"/><rect x="18" y="6" width="2" height="2" fill="#9cf89c"/><rect x="20" y="6" width="4" height="2" fill="#00e000"/><rect x="24" y="6" width="2" height="2" fill="#000"/><rect x="26" y="6" width="2" height="2" fill="#000" fill-opacity="0.45"/><rect x="12" y="8" width="2" height="2" fill="#000" fill-opacity="0.45"/><rect x="14" y="8" width="2" height="2" fill="#000"/><rect x="16" y="8" width="2" height="2" fill="#9cf89c"/><rect x="18" y="8" width="4" height="2" fill="#00e000"/><rect x="22" y="8" width="2" height="2" fill="#000"/><rect x="24" y="8" width="2" height="2" fill="#000" fill-opacity="0.45"/><rect x="2" y="10" width="2" height="2" fill="#000" fill-opacity="0.45"/><rect x="4" y="10" width="2" height="2" fill="#000"/><rect x="6" y="10" width="2" height="2" fill="#000" fill-opacity="0.45"/><rect x="10" y="10" width="2" height="2" fill="#000" fill-opacity="0.45"/><rect x="12" y="10" width="2" height="2" fill="#000"/><rect x="14" y="10" width="2" height="2" fill="#9cf89c"/><rect x="16" y="10" width="4" height="2" fill="#00e000"/><rect x="20" y="10" width="2" height="2" fill="#000"/><rect x="22" y="10" width="2" height="2" fill="#000" fill-opacity="0.45"/><rect x="0" y="12" width="2" height="2" fill="#000" fill-opacity="0.45"/><rect x="2" y="12" width="2" height="2" fill="#000"/><rect x="4" y="12" width="2" height="2" fill="#9cf89c"/><rect x="6" y="12" width="2" height="2" fill="#000"/><rect x="8" y="12" width="2" height="2" fill="#000" fill-opacity="0.45"/><rect x="10" y="12" width="2" height="2" fill="#000"/><rect x="12" y="12" width="2" height="2" fill="#9cf89c"/><rect x="14" y="12" width="4" height="2" fill="#00e000"/><rect x="18" y="12" width="2" height="2" fill="#000"/><rect x="20" y="12" width="2" height="2" fill="#000" fill-opacity="0.45"/><rect x="0" y="14" width="2" height="2" fill="#000"/><rect x="2" y="14" width="2" height="2" fill="#9cf89c"/><rect x="4" y="14" width="4" height="2" fill="#00e000"/><rect x="8" y="14" width="2" height="2" fill="#000"/><rect x="10" y="14" width="2" height="2" fill="#9cf89c"/><rect x="12" y="14" width="4" height="2" fill="#00e000"/><rect x="16" y="14" width="2" height="2" fill="#000"/><rect x="18" y="14" width="2" height="2" fill="#000" fill-opacity="0.45"/><rect x="0" y="16" width="2" height="2" fill="#000" fill-opacity="0.45"/><rect x="2" y="16" width="2" height="2" fill="#000"/><rect x="4" y="16" width="10" height="2" fill="#00e000"/><rect x="14" y="16" width="2" height="2" fill="#000"/><rect x="16" y="16" width="2" height="2" fill="#000" fill-opacity="0.45"/><rect x="2" y="18" width="2" height="2" fill="#000" fill-opacity="0.45"/><rect x="4" y="18" width="2" height="2" fill="#000"/><rect x="6" y="18" width="6" height="2" fill="#00e000"/><rect x="12" y="18" width="2" height="2" fill="#000"/><rect x="14" y="18" width="2" height="2" fill="#000" fill-opacity="0.45"/><rect x="4" y="20" width="2" height="2" fill="#000" fill-opacity="0.45"/><rect x="6" y="20" width="2" height="2" fill="#000"/><rect x="8" y="20" width="2" height="2" fill="#00e000"/><rect x="10" y="20" width="2" height="2" fill="#000"/><rect x="12" y="20" width="2" height="2" fill="#000" fill-opacity="0.45"/><rect x="6" y="22" width="2" height="2" fill="#000" fill-opacity="0.45"/><rect x="8" y="22" width="2" height="2" fill="#000"/><rect x="10" y="22" width="2" height="2" fill="#000" fill-opacity="0.45"/></svg>
<svg style="left:826px;top:354px" width="28" height="24" shape-rendering="crispEdges"><rect x="20" y="0" width="2" height="2" fill="#000" fill-opacity="0.45"/><rect x="22" y="0" width="4" height="2" fill="#000"/><rect x="26" y="0" width="2" height="2" fill="#000" fill-opacity="0.45"/><rect x="18" y="2" width="2" height="2" fill="#000" fill-opacity="0.45"/><rect x="20" y="2" width="2" height="2" fill="#000"/><rect x="22" y="2" width="2" height="2" fill="#9cf89c"/><rect x="24" y="2" width="2" height="2" fill="#00e000"/><rect x="26" y="2" width="2" height="2" fill="#000"/><rect x="16" y="4" width="2" height="2" fill="#000" fill-opacity="0.45"/><rect x="18" y="4" width="2" height="2" fill="#000"/><rect x="20" y="4" width="2" height="2" fill="#9cf89c"/><rect x="22" y="4" width="4" height="2" fill="#00e000"/><rect x="26" y="4" width="2" height="2" fill="#000"/><rect x="14" y="6" width="2" height="2" fill="#000" fill-opacity="0.45"/><rect x="16" y="6" width="2" height="2" fill="#000"/><rect x="18" y="6" width="2" height="2" fill="#9cf89c"/><rect x="20" y="6" width="4" height="2" fill="#00e000"/><rect x="24" y="6" width="2" height="2" fill="#000"/><rect x="26" y="6" width="2" height="2" fill="#000" fill-opacity="0.45"/><rect x="12" y="8" width="2" height="2" fill="#000" fill-opacity="0.45"/><rect x="14" y="8" width="2" height="2" fill="#000"/><rect x="16" y="8" width="2" height="2" fill="#9cf89c"/><rect x="18" y="8" width="4" height="2" fill="#00e000"/><rect x="22" y="8" width="2" height="2" fill="#000"/><rect x="24" y="8" width="2" height="2" fill="#000" fill-opacity="0.45"/><rect x="2" y="10" width="2" height="2" fill="#000" fill-opacity="0.45"/><rect x="4" y="10" width="2" height="2" fill="#000"/><rect x="6" y="10" width="2" height="2" fill="#000" fill-opacity="0.45"/><rect x="10" y="10" width="2" height="2" fill="#000" fill-opacity="0.45"/><rect x="12" y="10" width="2" height="2" fill="#000"/><rect x="14" y="10" width="2" height="2" fill="#9cf89c"/><rect x="16" y="10" width="4" height="2" fill="#00e000"/><rect x="20" y="10" width="2" height="2" fill="#000"/><rect x="22" y="10" width="2" height="2" fill="#000" fill-opacity="0.45"/><rect x="0" y="12" width="2" height="2" fill="#000" fill-opacity="0.45"/><rect x="2" y="12" width="2" height="2" fill="#000"/><rect x="4" y="12" width="2" height="2" fill="#9cf89c"/><rect x="6" y="12" width="2" height="2" fill="#000"/><rect x="8" y="12" width="2" height="2" fill="#000" fill-opacity="0.45"/><rect x="10" y="12" width="2" height="2" fill="#000"/><rect x="12" y="12" width="2" height="2" fill="#9cf89c"/><rect x="14" y="12" width="4" height="2" fill="#00e000"/><rect x="18" y="12" width="2" height="2" fill="#000"/><rect x="20" y="12" width="2" height="2" fill="#000" fill-opacity="0.45"/><rect x="0" y="14" width="2" height="2" fill="#000"/><rect x="2" y="14" width="2" height="2" fill="#9cf89c"/><rect x="4" y="14" width="4" height="2" fill="#00e000"/><rect x="8" y="14" width="2" height="2" fill="#000"/><rect x="10" y="14" width="2" height="2" fill="#9cf89c"/><rect x="12" y="14" width="4" height="2" fill="#00e000"/><rect x="16" y="14" width="2" height="2" fill="#000"/><rect x="18" y="14" width="2" height="2" fill="#000" fill-opacity="0.45"/><rect x="0" y="16" width="2" height="2" fill="#000" fill-opacity="0.45"/><rect x="2" y="16" width="2" height="2" fill="#000"/><rect x="4" y="16" width="10" height="2" fill="#00e000"/><rect x="14" y="16" width="2" height="2" fill="#000"/><rect x="16" y="16" width="2" height="2" fill="#000" fill-opacity="0.45"/><rect x="2" y="18" width="2" height="2" fill="#000" fill-opacity="0.45"/><rect x="4" y="18" width="2" height="2" fill="#000"/><rect x="6" y="18" width="6" height="2" fill="#00e000"/><rect x="12" y="18" width="2" height="2" fill="#000"/><rect x="14" y="18" width="2" height="2" fill="#000" fill-opacity="0.45"/><rect x="4" y="20" width="2" height="2" fill="#000" fill-opacity="0.45"/><rect x="6" y="20" width="2" height="2" fill="#000"/><rect x="8" y="20" width="2" height="2" fill="#00e000"/><rect x="10" y="20" width="2" height="2" fill="#000"/><rect x="12" y="20" width="2" height="2" fill="#000" fill-opacity="0.45"/><rect x="6" y="22" width="2" height="2" fill="#000" fill-opacity="0.45"/><rect x="8" y="22" width="2" height="2" fill="#000"/><rect x="10" y="22" width="2" height="2" fill="#000" fill-opacity="0.45"/></svg>
<div class="txt" style="left:872px;top:349px">English text</div>
<svg style="left:782px;top:388px" width="20" height="30" shape-rendering="crispEdges"><rect x="4" y="0" width="2" height="2" fill="#0c1c24" fill-opacity="0.45"/><rect x="6" y="0" width="8" height="2" fill="#0c1c24"/><rect x="14" y="0" width="2" height="2" fill="#0c1c24" fill-opacity="0.45"/><rect x="2" y="2" width="2" height="2" fill="#0c1c24" fill-opacity="0.45"/><rect x="4" y="2" width="2" height="2" fill="#0c1c24"/><rect x="6" y="2" width="4" height="2" fill="#b8e0ec"/><rect x="10" y="2" width="4" height="2" fill="#4a8c9c"/><rect x="14" y="2" width="2" height="2" fill="#0c1c24"/><rect x="16" y="2" width="2" height="2" fill="#0c1c24" fill-opacity="0.45"/><rect x="2" y="4" width="2" height="2" fill="#0c1c24"/><rect x="4" y="4" width="2" height="2" fill="#b8e0ec"/><rect x="6" y="4" width="10" height="2" fill="#4a8c9c"/><rect x="16" y="4" width="2" height="2" fill="#0c1c24"/><rect x="0" y="6" width="2" height="2" fill="#0c1c24" fill-opacity="0.45"/><rect x="2" y="6" width="2" height="2" fill="#0c1c24"/><rect x="4" y="6" width="4" height="2" fill="#4a8c9c"/><rect x="8" y="6" width="4" height="2" fill="#0c1c24"/><rect x="12" y="6" width="4" height="2" fill="#4a8c9c"/><rect x="16" y="6" width="2" height="2" fill="#0c1c24"/><rect x="18" y="6" width="2" height="2" fill="#0c1c24" fill-opacity="0.45"/><rect x="2" y="8" width="2" height="2" fill="#0c1c24" fill-opacity="0.45"/><rect x="4" y="8" width="4" height="2" fill="#0c1c24"/><rect x="8" y="8" width="2" height="2" fill="#0c1c24" fill-opacity="0.45"/><rect x="10" y="8" width="2" height="2" fill="#0c1c24"/><rect x="12" y="8" width="2" height="2" fill="#b8e0ec"/><rect x="14" y="8" width="2" height="2" fill="#4a8c9c"/><rect x="16" y="8" width="2" height="2" fill="#0c1c24"/><rect x="8" y="10" width="2" height="2" fill="#0c1c24"/><rect x="10" y="10" width="2" height="2" fill="#b8e0ec"/><rect x="12" y="10" width="4" height="2" fill="#4a8c9c"/><rect x="16" y="10" width="2" height="2" fill="#0c1c24"/><rect x="6" y="12" width="2" height="2" fill="#0c1c24" fill-opacity="0.45"/><rect x="8" y="12" width="2" height="2" fill="#0c1c24"/><rect x="10" y="12" width="2" height="2" fill="#b8e0ec"/><rect x="12" y="12" width="2" height="2" fill="#4a8c9c"/><rect x="14" y="12" width="2" height="2" fill="#0c1c24"/><rect x="16" y="12" width="2" height="2" fill="#0c1c24" fill-opacity="0.45"/><rect x="6" y="14" width="2" height="2" fill="#0c1c24"/><rect x="8" y="14" width="2" height="2" fill="#b8e0ec"/><rect x="10" y="14" width="4" height="2" fill="#4a8c9c"/><rect x="14" y="14" width="2" height="2" fill="#0c1c24"/><rect x="6" y="16" width="2" height="2" fill="#0c1c24"/><rect x="8" y="16" width="4" height="2" fill="#4a8c9c"/><rect x="12" y="16" width="2" height="2" fill="#0c1c24"/><rect x="6" y="18" width="2" height="2" fill="#0c1c24"/><rect x="8" y="18" width="4" height="2" fill="#4a8c9c"/><rect x="12" y="18" width="2" height="2" fill="#0c1c24"/><rect x="6" y="20" width="2" height="2" fill="#0c1c24" fill-opacity="0.45"/><rect x="8" y="20" width="4" height="2" fill="#0c1c24"/><rect x="12" y="20" width="2" height="2" fill="#0c1c24" fill-opacity="0.45"/><rect x="4" y="22" width="2" height="2" fill="#0c1c24" fill-opacity="0.45"/><rect x="6" y="22" width="2" height="2" fill="#0c1c24"/><rect x="8" y="22" width="4" height="2" fill="#4a8c9c"/><rect x="12" y="22" width="2" height="2" fill="#0c1c24"/><rect x="14" y="22" width="2" height="2" fill="#0c1c24" fill-opacity="0.45"/><rect x="4" y="24" width="2" height="2" fill="#0c1c24"/><rect x="6" y="24" width="2" height="2" fill="#b8e0ec"/><rect x="8" y="24" width="6" height="2" fill="#4a8c9c"/><rect x="14" y="24" width="2" height="2" fill="#0c1c24"/><rect x="4" y="26" width="2" height="2" fill="#0c1c24"/><rect x="6" y="26" width="8" height="2" fill="#4a8c9c"/><rect x="14" y="26" width="2" height="2" fill="#0c1c24"/><rect x="4" y="28" width="2" height="2" fill="#0c1c24" fill-opacity="0.45"/><rect x="6" y="28" width="8" height="2" fill="#0c1c24"/><rect x="14" y="28" width="2" height="2" fill="#0c1c24" fill-opacity="0.45"/></svg>
<svg style="left:830px;top:388px" width="20" height="30" shape-rendering="crispEdges"><rect x="4" y="0" width="2" height="2" fill="#0c1c24" fill-opacity="0.45"/><rect x="6" y="0" width="8" height="2" fill="#0c1c24"/><rect x="14" y="0" width="2" height="2" fill="#0c1c24" fill-opacity="0.45"/><rect x="2" y="2" width="2" height="2" fill="#0c1c24" fill-opacity="0.45"/><rect x="4" y="2" width="2" height="2" fill="#0c1c24"/><rect x="6" y="2" width="4" height="2" fill="#b8e0ec"/><rect x="10" y="2" width="4" height="2" fill="#4a8c9c"/><rect x="14" y="2" width="2" height="2" fill="#0c1c24"/><rect x="16" y="2" width="2" height="2" fill="#0c1c24" fill-opacity="0.45"/><rect x="2" y="4" width="2" height="2" fill="#0c1c24"/><rect x="4" y="4" width="2" height="2" fill="#b8e0ec"/><rect x="6" y="4" width="10" height="2" fill="#4a8c9c"/><rect x="16" y="4" width="2" height="2" fill="#0c1c24"/><rect x="0" y="6" width="2" height="2" fill="#0c1c24" fill-opacity="0.45"/><rect x="2" y="6" width="2" height="2" fill="#0c1c24"/><rect x="4" y="6" width="4" height="2" fill="#4a8c9c"/><rect x="8" y="6" width="4" height="2" fill="#0c1c24"/><rect x="12" y="6" width="4" height="2" fill="#4a8c9c"/><rect x="16" y="6" width="2" height="2" fill="#0c1c24"/><rect x="18" y="6" width="2" height="2" fill="#0c1c24" fill-opacity="0.45"/><rect x="2" y="8" width="2" height="2" fill="#0c1c24" fill-opacity="0.45"/><rect x="4" y="8" width="4" height="2" fill="#0c1c24"/><rect x="8" y="8" width="2" height="2" fill="#0c1c24" fill-opacity="0.45"/><rect x="10" y="8" width="2" height="2" fill="#0c1c24"/><rect x="12" y="8" width="2" height="2" fill="#b8e0ec"/><rect x="14" y="8" width="2" height="2" fill="#4a8c9c"/><rect x="16" y="8" width="2" height="2" fill="#0c1c24"/><rect x="8" y="10" width="2" height="2" fill="#0c1c24"/><rect x="10" y="10" width="2" height="2" fill="#b8e0ec"/><rect x="12" y="10" width="4" height="2" fill="#4a8c9c"/><rect x="16" y="10" width="2" height="2" fill="#0c1c24"/><rect x="6" y="12" width="2" height="2" fill="#0c1c24" fill-opacity="0.45"/><rect x="8" y="12" width="2" height="2" fill="#0c1c24"/><rect x="10" y="12" width="2" height="2" fill="#b8e0ec"/><rect x="12" y="12" width="2" height="2" fill="#4a8c9c"/><rect x="14" y="12" width="2" height="2" fill="#0c1c24"/><rect x="16" y="12" width="2" height="2" fill="#0c1c24" fill-opacity="0.45"/><rect x="6" y="14" width="2" height="2" fill="#0c1c24"/><rect x="8" y="14" width="2" height="2" fill="#b8e0ec"/><rect x="10" y="14" width="4" height="2" fill="#4a8c9c"/><rect x="14" y="14" width="2" height="2" fill="#0c1c24"/><rect x="6" y="16" width="2" height="2" fill="#0c1c24"/><rect x="8" y="16" width="4" height="2" fill="#4a8c9c"/><rect x="12" y="16" width="2" height="2" fill="#0c1c24"/><rect x="6" y="18" width="2" height="2" fill="#0c1c24"/><rect x="8" y="18" width="4" height="2" fill="#4a8c9c"/><rect x="12" y="18" width="2" height="2" fill="#0c1c24"/><rect x="6" y="20" width="2" height="2" fill="#0c1c24" fill-opacity="0.45"/><rect x="8" y="20" width="4" height="2" fill="#0c1c24"/><rect x="12" y="20" width="2" height="2" fill="#0c1c24" fill-opacity="0.45"/><rect x="4" y="22" width="2" height="2" fill="#0c1c24" fill-opacity="0.45"/><rect x="6" y="22" width="2" height="2" fill="#0c1c24"/><rect x="8" y="22" width="4" height="2" fill="#4a8c9c"/><rect x="12" y="22" width="2" height="2" fill="#0c1c24"/><rect x="14" y="22" width="2" height="2" fill="#0c1c24" fill-opacity="0.45"/><rect x="4" y="24" width="2" height="2" fill="#0c1c24"/><rect x="6" y="24" width="2" height="2" fill="#b8e0ec"/><rect x="8" y="24" width="6" height="2" fill="#4a8c9c"/><rect x="14" y="24" width="2" height="2" fill="#0c1c24"/><rect x="4" y="26" width="2" height="2" fill="#0c1c24"/><rect x="6" y="26" width="8" height="2" fill="#4a8c9c"/><rect x="14" y="26" width="2" height="2" fill="#0c1c24"/><rect x="4" y="28" width="2" height="2" fill="#0c1c24" fill-opacity="0.45"/><rect x="6" y="28" width="8" height="2" fill="#0c1c24"/><rect x="14" y="28" width="2" height="2" fill="#0c1c24" fill-opacity="0.45"/></svg>
<div class="txt" style="left:872px;top:389px">Chinese text</div>
<div class="a" style="left:1320px;top:189px;width:2px;height:834px;background:#8c8c8c"></div>
<div class="a" style="left:1322px;top:144px;width:2px;height:879px;background:#f8f8f8"></div>
<div class="dtitle" style="left:1324px;top:144px;width:1700px"></div>
<div class="a" style="left:1324px;top:185px;width:1700px;height:2px;background:#c0c0c0"></div>
<div class="a" style="left:1324px;top:187px;width:1700px;height:1px;background:#e0e0e0"></div>
<div class="a" style="left:1324px;top:188px;width:1700px;height:1px;background:#8e8e8e"></div>
<div class="dtitle" style="display:none"></div>
<div class="htxt" style="left:1394px;top:152px;width:1630px;text-align:center;color:#262626">源文和窗体</div>
<svg style="left:1327px;top:149px" width="30" height="30" viewBox="-15 -15 30 30"><circle r="14" fill="#5e5e5e"/><path d="M-5.5,-5.5L5.5,5.5M5.5,-5.5L-5.5,5.5" stroke="#e6e6e6" stroke-width="3.2" stroke-linecap="round"/></svg>
<svg style="left:1363px;top:149px" width="30" height="30" viewBox="-15 -15 30 30"><circle r="14" fill="#5e5e5e"/><rect x="-2.7" y="-5" width="10.7" height="9" fill="none" stroke="#e6e6e6" stroke-width="2"/><rect x="-7" y="-0.7" width="10.7" height="8.7" fill="#5e5e5e" stroke="#e6e6e6" stroke-width="2"/></svg>
<div class="a" style="left:1324px;top:189px;width:1700px;height:832px;background:#bfbfbf"></div>
<div class="a" style="left:1325px;top:188px;width:180px;height:267px;border-radius:10px 10px 0 0;overflow:hidden;background:#ececec"><div class="a" style="left:0;top:56px;width:179px;height:157px;background:#bebebe;border-bottom:1.5px solid #7a7a7a;border-right:1px solid #f2f2f2"></div><div class="a" style="left:0;top:214px;width:180px;height:53px;background:linear-gradient(#fafafa,#e0e0e0)"></div></div>
<div class="a" style="left:1342px;top:204px;width:24px;height:24px;border-radius:50%;background:#dcdcdc;border:1px solid #bcbcbc"></div>
<div class="a" style="left:1386px;top:204px;width:24px;height:24px;border-radius:50%;background:#dcdcdc;border:1px solid #bcbcbc"></div>
<div class="a" style="left:1430px;top:204px;width:24px;height:24px;border-radius:50%;background:#dcdcdc;border:1px solid #bcbcbc"></div>
<div class="a" style="left:1352px;top:270px;width:126px;height:40px;border-radius:9px;background:#fff;box-shadow:0 1px 1px rgba(0,0,0,.25)"></div>
<div class="a" style="left:1352px;top:338px;width:126px;height:40px;border-radius:9px;background:#fff;box-shadow:0 1px 1px rgba(0,0,0,.25)"></div>
<div class="txt" style="left:1352px;top:272px;width:126px;text-align:center;font-size:26px;letter-spacing:0">#按钮</div>
<div class="txt" style="left:1352px;top:340px;width:126px;text-align:center;font-size:26px;letter-spacing:0">按钮2</div>
<svg style="left:1483px;top:433px" width="22" height="22"><path d="M1,22L22,1M9,22L22,9M17,22L22,17" stroke="#777" stroke-width="2"/></svg>
<div class="a" style="left:764px;top:1020px;width:2260px;height:1px;background:#c8c8c8"></div>
<div class="a" style="left:764px;top:1021px;width:2260px;height:2px;background:#9a9a9a"></div>
<div class="a" style="left:764px;top:1023px;width:2260px;height:1px;background:#f8f8f8"></div>
<div class="a" style="left:764px;top:1024px;width:2258px;height:1px;background:#8e8e8e"></div>
<div class="a" style="left:764px;top:1025px;width:2258px;height:455px;background:#fff;overflow:hidden"><div class="txt" style="left:22px;top:6px">MainWindow</div><div class="a" style="left:6px;top:58px;width:2248px;height:257px;background:#ebf2fd"></div><div class="a" style="left:6px;top:318px;width:2248px;height:200px;background:#e7fefd"></div><div class="bh" style="left:16px;top:69px">翻译为 American English (United States)</div><div class="inp" style="left:15px;top:116px;width:2228px;height:51px"></div><div class="bh" style="left:16px;top:189px">American English (United States) 的译文注释</div><div class="inp" style="left:15px;top:236px;width:2228px;height:51px"></div><div class="bh" style="left:16px;top:330px">翻译为 简体中文 (中国)</div><div class="inp" style="left:15px;top:376px;width:2228px;height:51px"></div><div class="txt" style="left:27px;top:386px">主窗口</div><div class="bh" style="left:16px;top:449px">简体中文 (中国) 的译文注释</div></div>
<div class="a" style="left:764px;top:1025px;width:1px;height:455px;background:#b0b0b0"></div>
<div class="a" style="left:3021px;top:1025px;width:1px;height:455px;background:#a8a8a8"></div>
<div class="a" style="left:3022px;top:1020px;width:2px;height:460px;background:#f6f6f6"></div>
<div class="a" style="left:764px;top:1480px;width:2260px;height:2px;background:#9c9c9c"></div>
<div class="a" style="left:764px;top:1482px;width:2260px;height:1px;background:#b0b0b0"></div>
<div class="a" style="left:764px;top:1483px;width:2260px;height:1px;background:#f4f4f4"></div>
<div class="dtitle" style="left:764px;top:1484px;width:1135px"></div>
<div class="a" style="left:764px;top:1525px;width:1135px;height:2px;background:#c0c0c0"></div>
<div class="a" style="left:764px;top:1527px;width:1135px;height:1px;background:#e0e0e0"></div>
<div class="a" style="left:764px;top:1528px;width:1135px;height:1px;background:#8e8e8e"></div>
<div class="dtitle" style="display:none"></div>
<div class="htxt" style="left:834px;top:1492px;width:1065px;text-align:center;color:#262626">短语和猜测</div>
<svg style="left:767px;top:1489px" width="30" height="30" viewBox="-15 -15 30 30"><circle r="14" fill="#5e5e5e"/><path d="M-5.5,-5.5L5.5,5.5M5.5,-5.5L-5.5,5.5" stroke="#e6e6e6" stroke-width="3.2" stroke-linecap="round"/></svg>
<svg style="left:803px;top:1489px" width="30" height="30" viewBox="-15 -15 30 30"><circle r="14" fill="#5e5e5e"/><rect x="-2.7" y="-5" width="10.7" height="9" fill="none" stroke="#e6e6e6" stroke-width="2"/><rect x="-7" y="-0.7" width="10.7" height="8.7" fill="#5e5e5e" stroke="#e6e6e6" stroke-width="2"/></svg>
<div class="a" style="left:765px;top:1529px;width:1133px;height:145px;background:#fff"></div>
<div class="hdr" style="left:765px;top:1529px;width:1131px;height:35px;border-top:1px solid #f8f8f8"></div>
<div class="sep" style="left:964px;top:1534px;height:26px"></div>
<div class="sep" style="left:1164px;top:1534px;height:26px"></div>
<div class="sep" style="left:1893px;top:1534px;height:26px"></div>
<div class="htxt" style="left:774px;top:1531px">源短语</div>
<div class="htxt" style="left:975px;top:1531px">译文</div>
<div class="htxt" style="left:1174px;top:1531px">准确度</div>
<div class="a" style="left:765px;top:1600px;width:1131px;height:36px;background:#f0f2f1"></div>
<div class="txt" style="left:775px;top:1567px">MainWindow</div>
<div class="txt" style="left:976px;top:1565px">主窗口</div>
<div class="txt" style="left:1176px;top:1566px">猜测来自<span style="margin-left:3px">“</span><span style="margin-left:2px;letter-spacing:0.25px">MainWindow</span><span style="margin-left:1px">”</span><span style="margin-left:4px">(⌘1)</span></div>
<div class="a" style="left:1896px;top:1529px;width:2px;height:145px;background:#bcbcbc"></div>
<div class="a" style="left:1898px;top:1484px;width:2px;height:191px;background:#8c8c8c"></div>
<div class="a" style="left:1900px;top:1484px;width:2px;height:191px;background:#f8f8f8"></div>
<div class="dtitle" style="left:1902px;top:1484px;width:1122px"></div>
<div class="a" style="left:1902px;top:1525px;width:1122px;height:2px;background:#c0c0c0"></div>
<div class="a" style="left:1902px;top:1527px;width:1122px;height:1px;background:#e0e0e0"></div>
<div class="a" style="left:1902px;top:1528px;width:1122px;height:1px;background:#8e8e8e"></div>
<div class="dtitle" style="display:none"></div>
<div class="htxt" style="left:1972px;top:1492px;width:1052px;text-align:center;color:#262626">警告</div>
<svg style="left:1905px;top:1489px" width="30" height="30" viewBox="-15 -15 30 30"><circle r="14" fill="#5e5e5e"/><path d="M-5.5,-5.5L5.5,5.5M5.5,-5.5L-5.5,5.5" stroke="#e6e6e6" stroke-width="3.2" stroke-linecap="round"/></svg>
<svg style="left:1941px;top:1489px" width="30" height="30" viewBox="-15 -15 30 30"><circle r="14" fill="#5e5e5e"/><rect x="-2.7" y="-5" width="10.7" height="9" fill="none" stroke="#e6e6e6" stroke-width="2"/><rect x="-7" y="-0.7" width="10.7" height="8.7" fill="#5e5e5e" stroke="#e6e6e6" stroke-width="2"/></svg>
<div class="a" style="left:1902px;top:1529px;width:1120px;height:145px;background:#fff;border-left:1px solid #b4b4b4"></div>
<div class="a" style="left:3021px;top:1529px;width:1px;height:145px;background:#a8a8a8"></div>
<div class="a" style="left:764px;top:1674px;width:2260px;height:1px;background:#b4b4b4"></div>
<div class="a" style="left:0;top:1675px;width:3024px;height:55px;background:linear-gradient(#fbfbfb,#dcdcdc)"></div>
<div class="a" style="left:0px;top:1675px;width:3024px;height:1px;background:#f0f0f0"></div>
<div class="a" style="left:0px;top:1676px;width:3024px;height:1px;background:#8a8a8a"></div>
<div class="txt" style="left:2872px;top:1689px">1/5</div>
<div class="txt" style="left:2935px;top:1687px">已修改</div>
<div class="a" style="left:761px;top:141px;width:564px;height:328px;border:6px solid #e8412a;border-radius:13px"></div>
</div></body></html>
